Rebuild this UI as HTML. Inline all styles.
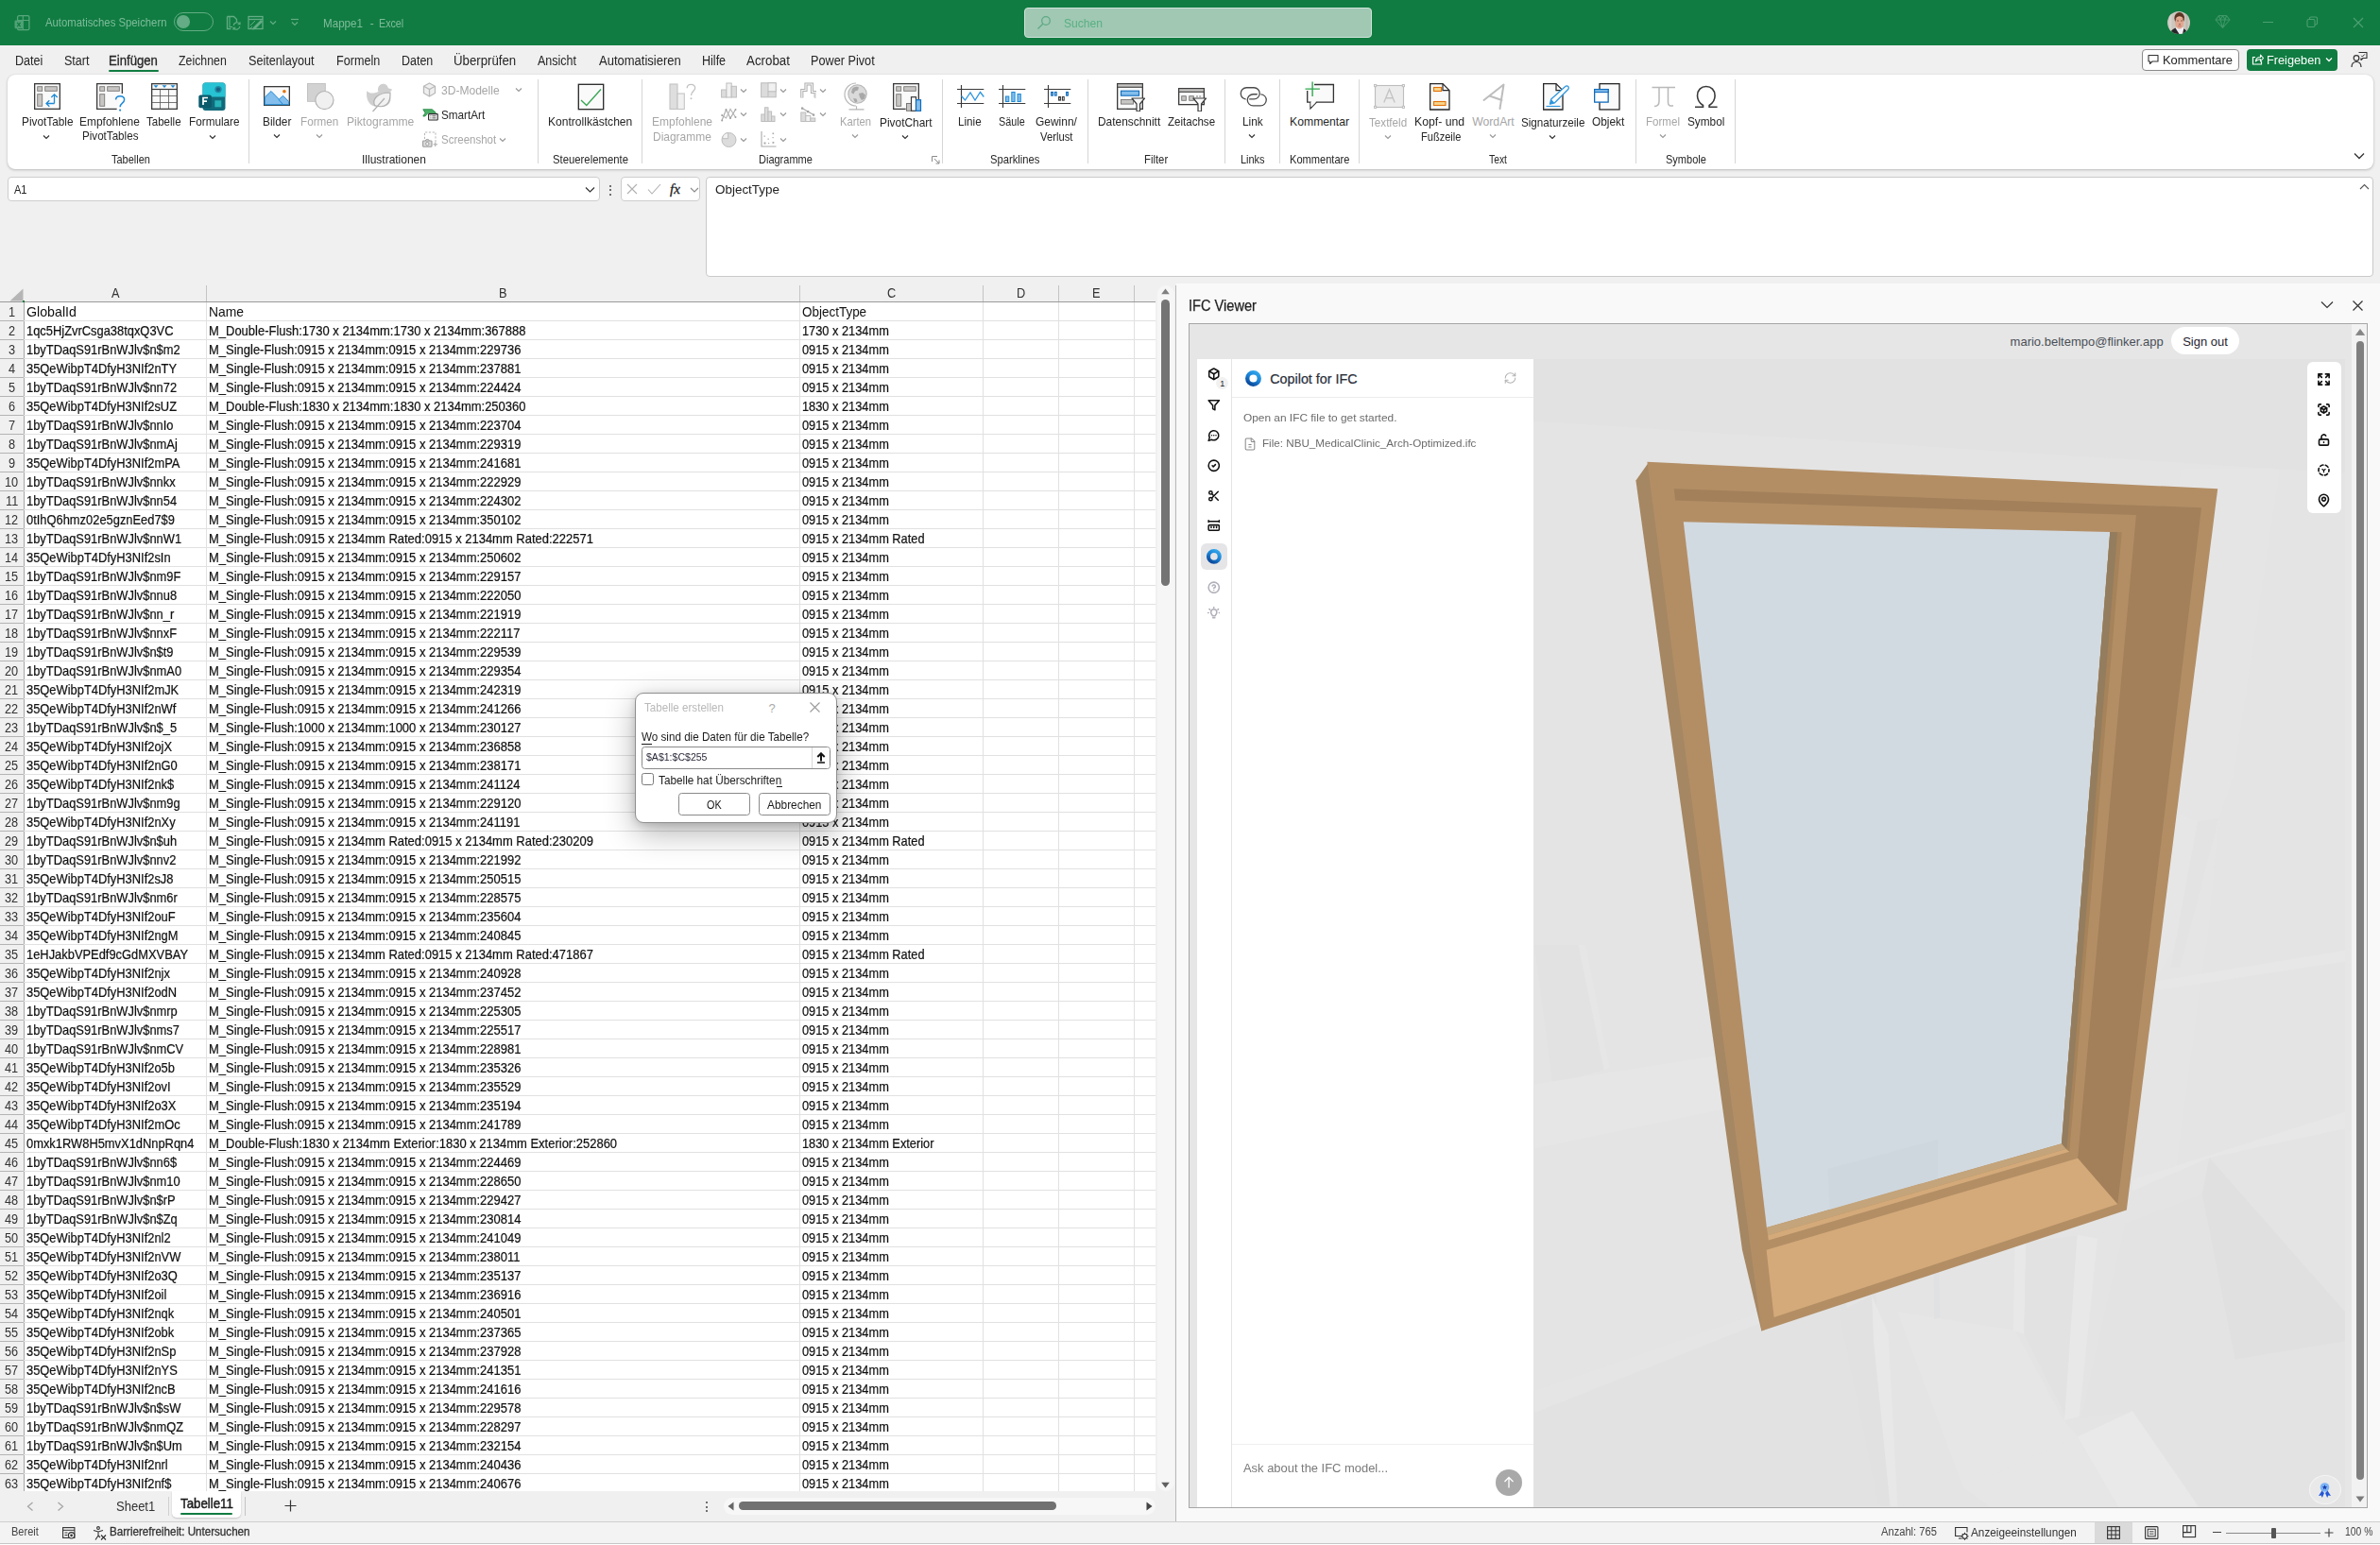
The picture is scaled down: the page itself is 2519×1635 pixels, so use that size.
<!DOCTYPE html>
<html lang="de"><head><meta charset="utf-8"><title>Mappe1 - Excel</title><style>html,body{margin:0;padding:0;}
body{width:2519px;height:1635px;overflow:hidden;position:relative;background:#f0f0f0;font-family:"Liberation Sans",sans-serif;}
.b{position:absolute;display:block;}
.t{position:absolute;display:block;white-space:nowrap;transform-origin:0 0;}
.c{-webkit-text-stroke:0.22px #111;}
</style></head><body>
<div class="b" style="left:0.00px;top:0.00px;width:2519.00px;height:48.00px;background:#107C41;"></div>
<svg class="b" style="left:15.00px;top:16.00px;" width="17" height="17" viewBox="0 0 17 17"><rect x="3.600" y=".650" width="12.300" height="15" rx="1.500" fill="none" stroke="#58a67c" stroke-width="1.300"/><path d="M9.300 .650V15.650M3.600 5.500h12.300" stroke="#58a67c" stroke-width="1.100" fill="none"/><rect x=".500" y="5.500" width="8.800" height="8.800" rx="1.200" fill="#4fa276"/><path d="M3.200 7.800l3.400 4.300M6.600 7.800l-3.400 4.300" stroke="#107C41" stroke-width="1.200"/></svg>
<span class="t" style="left:48.20px;top:18.27px;font-size:12.20px;line-height:12.20px;color:#7fbb9c;transform:scaleX(0.9296);">Automatisches Speichern</span>
<div class="b" style="left:184.00px;top:13.20px;width:41.80px;height:20.00px;border:1.3px solid #63ac85;border-radius:10px;box-sizing:border-box;"></div>
<div class="b" style="left:187.10px;top:16.30px;width:13.70px;height:13.70px;background:#63ac85;border-radius:6.850px;"></div>
<svg class="b" style="left:239.00px;top:15.00px;" width="16" height="18" viewBox="0 0 16 18"><path d="M1.5 2.5h7l3 3v3" fill="none" stroke="#63ac85" stroke-width="1.3"/><path d="M1.5 2.5v13h4" fill="none" stroke="#63ac85" stroke-width="1.3"/><path d="M4 2.5v11h3" fill="none" stroke="#63ac85" stroke-width="1.1"/><path d="M8.2 12a3.6 3.6 0 0 1 6.6-1.6M14.8 13a3.6 3.6 0 0 1-6.6 1.6" fill="none" stroke="#63ac85" stroke-width="1.2"/><path d="M15 8.3v2.4h-2.4M8 16.7v-2.4h2.4" fill="none" stroke="#63ac85" stroke-width="1.1"/></svg>
<svg class="b" style="left:262.00px;top:16.00px;" width="18" height="16" viewBox="0 0 18 16"><rect x="1" y="1.5" width="15" height="13" fill="none" stroke="#63ac85" stroke-width="1.3"/><path d="M1 4.5h15" stroke="#63ac85" stroke-width="1.3"/><path d="M6 13l8-8 2 2-8 8-2.6.6z" fill="#63ac85"/><path d="M3 11l5-5M3 14l2-2" stroke="#63ac85" stroke-width="1"/></svg>
<svg class="b" style="left:285.00px;top:21.00px;" width="8" height="6" viewBox="0 0 8 6"><path d="M1 1.5l3 3 3-3" fill="none" stroke="#63ac85" stroke-width="1.2"/></svg>
<svg class="b" style="left:306.50px;top:19.00px;" width="10" height="9" viewBox="0 0 10 9"><path d="M1 1.5h8" stroke="#63ac85" stroke-width="1.2"/><path d="M2 4.5l3 3 3-3" fill="none" stroke="#63ac85" stroke-width="1.2"/></svg>
<span class="t" style="left:341.50px;top:18.77px;font-size:12.20px;line-height:12.20px;color:#7fbb9c;transform:scaleX(0.9527);">Mappe1</span>
<span class="t" style="left:391.50px;top:18.77px;font-size:12.20px;line-height:12.20px;color:#7fbb9c;">-</span>
<span class="t" style="left:400.50px;top:18.77px;font-size:12.20px;line-height:12.20px;color:#7fbb9c;transform:scaleX(0.8782);">Excel</span>
<div class="b" style="left:1084.00px;top:8.00px;width:368.00px;height:32.00px;background:#a0c8b3;border:1px solid #d0e4d9;border-radius:4px;box-sizing:border-box;"></div>
<svg class="b" style="left:1097.00px;top:16.00px;" width="16" height="16" viewBox="0 0 16 16"><circle cx="10" cy="6" r="4.3" fill="none" stroke="#5fa985" stroke-width="1.3"/><path d="M6.8 9.2L1.5 14.5" stroke="#5fa985" stroke-width="1.3"/></svg>
<span class="t" style="left:1126.30px;top:18.10px;font-size:13.00px;line-height:13.00px;color:#58b083;transform:scaleX(0.9300);">Suchen</span>
<svg class="b" style="left:2294.00px;top:12.00px;" width="24" height="24" viewBox="0 0 24 24"><defs><clipPath id="av"><circle cx="12" cy="12" r="12"/></clipPath><filter id="avb" x="-10%" y="-10%" width="120%" height="120%"><feGaussianBlur stdDeviation=".45"/></filter></defs><g clip-path="url(#av)"><rect width="24" height="24" fill="#cbc7bf"/><g filter="url(#avb)"><rect x="2" y="0" width="2.500" height="24" fill="#d6d1cb"/><rect x="19.500" y="0" width="2" height="24" fill="#bdb8ae"/><path d="M3 24c.500-4 3-5.500 5.500-6.500l7 0c3 1 5 2.500 5.500 6.500z" fill="#25252a"/><path d="M8.300 17.300l4.400 7h3.300l1.300-6.500-2.300-1.500z" fill="#efeff4"/><ellipse cx="12.700" cy="7.200" rx="5.300" ry="6.300" fill="#5b3521"/><ellipse cx="12.700" cy="12.200" rx="4.500" ry="6.400" fill="#e2a78f"/><path d="M8.400 8.500c1-2.500 2.500-3.300 4.300-3.300s3.600.800 4.300 3.300c-1.500-1.200-3-1.500-4.300-1.500s-3 .300-4.300 1.500z" fill="#e8b39c"/><path d="M10 10h2M14 10h2" stroke="#6b4636" stroke-width=".700"/><path d="M12.200 13.700h1.600" stroke="#7a4a3a" stroke-width=".900"/><path d="M11.200 15.600h3.400" stroke="#c9746e" stroke-width="1"/></g></g></svg>
<svg class="b" style="left:2344.00px;top:15.00px;" width="17" height="16" viewBox="0 0 17 16"><path d="M4.500 1.500h8l3.500 4.500-7.500 8.500L1 6z M1 6h15 M4.500 1.500l1.500 4.500 2.500 8.500 2.500-8.500 1.500-4.500 M6 6l2.500-4.500L11 6" fill="none" stroke="#3f9668" stroke-width="1.1" stroke-linejoin="round"/></svg>
<div class="b" style="left:2395.00px;top:23.30px;width:11.00px;height:1.20px;background:#4c9f73;"></div>
<svg class="b" style="left:2441.00px;top:17.00px;" width="13" height="13" viewBox="0 0 13 13"><rect x="1" y="3.500" width="8" height="8" rx="1.500" fill="none" stroke="#4c9f73" stroke-width="1.100"/><path d="M3.500 3.500v-1a1.500 1.500 0 0 1 1.500-1.500h5a1.500 1.500 0 0 1 1.500 1.500v5a1.500 1.500 0 0 1-1.500 1.500h-1" fill="none" stroke="#4c9f73" stroke-width="1.100"/></svg>
<svg class="b" style="left:2490.00px;top:18.00px;" width="12" height="12" viewBox="0 0 12 12"><path d="M1 1l10 10M11 1L1 11" stroke="#4c9f73" stroke-width="1.200"/></svg>
<div class="b" style="left:0.00px;top:48.00px;width:2519.00px;height:245.00px;background:#f0f0f0;"></div>
<span class="t" style="left:16.40px;top:57.45px;font-size:14.00px;line-height:14.00px;color:#262626;transform:scaleX(0.8996);">Datei</span>
<span class="t" style="left:68.30px;top:57.45px;font-size:14.00px;line-height:14.00px;color:#262626;transform:scaleX(0.8964);">Start</span>
<span class="t" style="left:115.40px;top:57.45px;font-size:14.00px;line-height:14.00px;color:#262626;transform:scaleX(0.9391);-webkit-text-stroke:0.3px #262626;">Einfügen</span>
<span class="t" style="left:188.70px;top:57.45px;font-size:14.00px;line-height:14.00px;color:#262626;transform:scaleX(0.8821);">Zeichnen</span>
<span class="t" style="left:263.40px;top:57.45px;font-size:14.00px;line-height:14.00px;color:#262626;transform:scaleX(0.9033);">Seitenlayout</span>
<span class="t" style="left:356.00px;top:57.45px;font-size:14.00px;line-height:14.00px;color:#262626;transform:scaleX(0.9018);">Formeln</span>
<span class="t" style="left:425.40px;top:57.45px;font-size:14.00px;line-height:14.00px;color:#262626;transform:scaleX(0.8914);">Daten</span>
<span class="t" style="left:480.40px;top:57.45px;font-size:14.00px;line-height:14.00px;color:#262626;transform:scaleX(0.9452);">Überprüfen</span>
<span class="t" style="left:569.00px;top:57.45px;font-size:14.00px;line-height:14.00px;color:#262626;transform:scaleX(0.8931);">Ansicht</span>
<span class="t" style="left:634.00px;top:57.45px;font-size:14.00px;line-height:14.00px;color:#262626;transform:scaleX(0.9296);">Automatisieren</span>
<span class="t" style="left:743.30px;top:57.45px;font-size:14.00px;line-height:14.00px;color:#262626;transform:scaleX(0.8962);">Hilfe</span>
<span class="t" style="left:790.10px;top:57.45px;font-size:14.00px;line-height:14.00px;color:#262626;transform:scaleX(0.9514);">Acrobat</span>
<span class="t" style="left:858.20px;top:57.45px;font-size:14.00px;line-height:14.00px;color:#262626;transform:scaleX(0.9064);">Power Pivot</span>
<div class="b" style="left:115.20px;top:73.50px;width:53.30px;height:2.20px;background:#107C41;border-radius:1.1px;"></div>
<div class="b" style="left:2267.40px;top:51.50px;width:102.20px;height:23.00px;background:#fff;border:1px solid #8a8a8a;border-radius:4px;box-sizing:border-box;"></div>
<svg class="b" style="left:2273.00px;top:56.50px;" width="12" height="12" viewBox="0 0 12 12"><path d="M1 1.500h10v6.500h-6l-2.500 2.500v-2.500h-1.500z" fill="none" stroke="#333" stroke-width="1.100" stroke-linejoin="round"/></svg>
<span class="t" style="left:2288.60px;top:56.87px;font-size:13.50px;line-height:13.50px;color:#222;transform:scaleX(0.9576);">Kommentare</span>
<div class="b" style="left:2378.00px;top:51.50px;width:95.50px;height:23.00px;background:#107C41;border-radius:4px;"></div>
<svg class="b" style="left:2383.00px;top:56.00px;" width="13" height="13" viewBox="0 0 13 13"><path d="M4 4.500h-2.500v7.500h9v-3" fill="none" stroke="#fff" stroke-width="1.200"/><path d="M4.500 9c0-3 2-4.500 5-4.500v-2.500l3 3.500-3 3.500v-2.300c-2.500 0-4 .5-5 2.300z" fill="none" stroke="#fff" stroke-width="1.100" stroke-linejoin="round"/></svg>
<span class="t" style="left:2399.20px;top:56.87px;font-size:13.50px;line-height:13.50px;color:#fff;transform:scaleX(0.9427);">Freigeben</span>
<svg class="b" style="left:2461.00px;top:60.00px;" width="8" height="6" viewBox="0 0 8 6"><path d="M1 1.500l3 3 3-3" fill="none" stroke="#fff" stroke-width="1.300"/></svg>
<svg class="b" style="left:2487.50px;top:53.50px;" width="19" height="19" viewBox="0 0 19 19"><circle cx="6" cy="7.500" r="2.800" fill="none" stroke="#333" stroke-width="1.200"/><path d="M1 17c0-4 2-5.500 5-5.500s5 1.500 5 5.500" fill="none" stroke="#333" stroke-width="1.200"/><path d="M8.500 1.500h8.500v6h-4l-2 2v-2" fill="none" stroke="#333" stroke-width="1.100" stroke-linejoin="round"/><path d="M11.200 4.800l1.200 1.200 2.400-2.600" fill="none" stroke="#333" stroke-width="1"/></svg>
<div class="b" style="left:8.00px;top:79.00px;width:2503.50px;height:100.00px;background:#fff;border-radius:8px;box-shadow:0 1px 3px rgba(0,0,0,.22),0 0 1px rgba(0,0,0,.15);"></div>
<div class="b" style="left:8.40px;top:187.00px;width:627.00px;height:25.50px;background:#fff;border:1px solid #cdcdcd;border-radius:4px;box-sizing:border-box;"></div>
<span class="t" style="left:15.10px;top:193.87px;font-size:13.50px;line-height:13.50px;color:#222;transform:scaleX(0.8176);">A1</span>
<svg class="b" style="left:619.00px;top:197.00px;" width="11" height="8" viewBox="0 0 11 8"><path d="M1 1.500l4.500 4.500 4.500-4.500" fill="none" stroke="#333" stroke-width="1.200"/></svg>
<div class="b" style="left:644.70px;top:195.50px;width:2.00px;height:2.00px;background:#444;border-radius:1px;"></div>
<div class="b" style="left:644.70px;top:200.00px;width:2.00px;height:2.00px;background:#444;border-radius:1px;"></div>
<div class="b" style="left:644.70px;top:204.50px;width:2.00px;height:2.00px;background:#444;border-radius:1px;"></div>
<div class="b" style="left:656.50px;top:187.00px;width:84.70px;height:25.50px;background:#fff;border:1px solid #cdcdcd;border-radius:4px;box-sizing:border-box;"></div>
<svg class="b" style="left:663.00px;top:194.00px;" width="12" height="12" viewBox="0 0 12 12"><path d="M1 1l10 10M11 1L1 11" stroke="#b0b0b0" stroke-width="1.100"/></svg>
<svg class="b" style="left:685.00px;top:194.00px;" width="15" height="12" viewBox="0 0 15 12"><path d="M1 6.500l4 4.500 9-10" fill="none" stroke="#b0b0b0" stroke-width="1.100"/></svg>
<span class="t" style="left:709px;top:190.500px;font-size:15px;line-height:18px;font-family:'Liberation Serif',serif;font-style:italic;color:#222;-webkit-text-stroke:0.3px #222;">fx</span>
<svg class="b" style="left:729.50px;top:198.00px;" width="10" height="7" viewBox="0 0 10 7"><path d="M1 1l4 4 4-4" fill="none" stroke="#8a8a8a" stroke-width="1.100"/></svg>
<div class="b" style="left:747.00px;top:187.00px;width:1765.00px;height:106.00px;background:#fff;border:1px solid #c9c9c9;border-radius:4px;box-sizing:border-box;"></div>
<span class="t" style="left:757.00px;top:193.87px;font-size:13.50px;line-height:13.50px;color:#222;transform:scaleX(0.9959);">ObjectType</span>
<svg class="b" style="left:2497.00px;top:194.00px;" width="11" height="7" viewBox="0 0 11 7"><path d="M1 6l4.500-4.500 4.500 4.500" fill="none" stroke="#555" stroke-width="1.100"/></svg>
<svg class="b" style="left:2491.00px;top:161.00px;" width="12" height="8" viewBox="0 0 12 8"><path d="M1 1.500l5 5 5-5" fill="none" stroke="#333" stroke-width="1.300"/></svg>
<div class="b" style="left:263.00px;top:84.40px;width:1.00px;height:88.50px;background:#d6d6d6;"></div>
<div class="b" style="left:568.70px;top:84.40px;width:1.00px;height:88.50px;background:#d6d6d6;"></div>
<div class="b" style="left:678.90px;top:84.40px;width:1.00px;height:88.50px;background:#d6d6d6;"></div>
<div class="b" style="left:996.80px;top:84.40px;width:1.00px;height:88.50px;background:#d6d6d6;"></div>
<div class="b" style="left:1150.90px;top:84.40px;width:1.00px;height:88.50px;background:#d6d6d6;"></div>
<div class="b" style="left:1296.00px;top:84.40px;width:1.00px;height:88.50px;background:#d6d6d6;"></div>
<div class="b" style="left:1354.00px;top:84.40px;width:1.00px;height:88.50px;background:#d6d6d6;"></div>
<div class="b" style="left:1438.10px;top:84.40px;width:1.00px;height:88.50px;background:#d6d6d6;"></div>
<div class="b" style="left:1730.60px;top:84.40px;width:1.00px;height:88.50px;background:#d6d6d6;"></div>
<div class="b" style="left:1835.70px;top:84.40px;width:1.00px;height:88.50px;background:#d6d6d6;"></div>
<svg class="b" style="left:36.00px;top:88.00px;" width="28" height="28" viewBox="0 0 28 28"><rect x=".650" y=".650" width="26.700" height="26.700" fill="#fafafa" stroke="#3a3a3a" stroke-width="1.300"/><rect x="3.700" y="3.700" width="5" height="4.600" fill="#c8c6c4" stroke="#797775" stroke-width=".900"/><rect x="11.700" y="3.700" width="12.600" height="4.600" fill="#c8c6c4" stroke="#797775" stroke-width=".900"/><rect x="3.700" y="11.700" width="5" height="12.600" fill="#c8c6c4" stroke="#797775" stroke-width=".900"/><path d="M21.500 21.500v-9.500M18.300 15l3.200-3.200 3.200 3.200M21.500 21.500h-8.500M16.300 18.300l-3.300 3.200 3.300 3.200" fill="none" stroke="#1e8ad6" stroke-width="1.300"/></svg>
<span class="t" style="left:22.60px;top:122.67px;font-size:12.20px;line-height:12.20px;color:#262626;transform:scaleX(0.9700);">PivotTable</span>
<svg class="b" style="left:45.30px;top:141.50px;" width="8" height="6" viewBox="0 0 8 6"><path d="M1 1.500l3 3 3-3" fill="none" stroke="#333" stroke-width="1.200"/></svg>
<svg class="b" style="left:102.00px;top:88.00px;" width="32" height="32" viewBox="0 0 32 32"><path d="M27.350 11v-10.350h-26.700v26.700h21" fill="#fafafa" stroke="#3a3a3a" stroke-width="1.300"/><rect x="3.700" y="3.700" width="5" height="4.600" fill="#c8c6c4" stroke="#797775" stroke-width=".900"/><rect x="11.700" y="3.700" width="12.600" height="4.600" fill="#c8c6c4" stroke="#797775" stroke-width=".900"/><rect x="3.700" y="11.700" width="5" height="12.600" fill="#c8c6c4" stroke="#797775" stroke-width=".900"/><path d="M20.600 17.600c0-5.200 9-5.200 9 0 0 3.600-4.500 3.600-4.500 7.600" fill="none" stroke="#1e8ad6" stroke-width="1.500"/><circle cx="25.100" cy="28.600" r="1.100" fill="#1e8ad6"/></svg>
<span class="t" style="left:84.35px;top:122.67px;font-size:12.20px;line-height:12.20px;color:#262626;transform:scaleX(0.9815);">Empfohlene</span>
<span class="t" style="left:86.55px;top:138.47px;font-size:12.20px;line-height:12.20px;color:#262626;transform:scaleX(0.9537);">PivotTables</span>
<svg class="b" style="left:160.00px;top:88.00px;" width="28" height="28" viewBox="0 0 28 28"><rect x=".650" y=".650" width="26.700" height="26.700" fill="#fafafa" stroke="#3a3a3a" stroke-width="1.300"/><path d="M.650 6.500h26.700" stroke="#3a3a3a" stroke-width="1.200"/><path d="M.650 13.500h26.700M.650 20.500h26.700M9.500 6.500v21M18.500 6.500v21" stroke="#555" stroke-width=".800"/><path d="M2.500 2.300h5l-2.500 2.700zM11.500 2.300h5l-2.500 2.700zM20.500 2.300h5l-2.500 2.700z" fill="#1e8ad6"/></svg>
<span class="t" style="left:155.30px;top:122.67px;font-size:12.20px;line-height:12.20px;color:#262626;transform:scaleX(0.9467);">Tabelle</span>
<svg class="b" style="left:209.50px;top:86.50px;" width="29" height="31" viewBox="0 0 29 31"><rect x="4.500" y=".500" width="24" height="29.500" rx="3" fill="#116a7b"/><path d="M4.500 15.500v-12a3 3 0 0 1 3-3h18a3 3 0 0 1 3 3v12z" fill="#27c2d3"/><circle cx="21" cy="7.600" r="3.700" fill="#1f8aa2"/><circle cx="21" cy="7.600" r="2.100" fill="#1a5f85"/><rect x="17.300" y="19.300" width="7" height="7" fill="#27b3b8"/><rect x=".300" y="13.600" width="13.600" height="13.600" rx="2" fill="#0b5a6b"/><path d="M5 24v-7.500h5M5 20.200h4" fill="none" stroke="#fff" stroke-width="1.700"/></svg>
<span class="t" style="left:199.50px;top:122.67px;font-size:12.20px;line-height:12.20px;color:#262626;transform:scaleX(0.9643);">Formulare</span>
<svg class="b" style="left:221.20px;top:141.50px;" width="8" height="6" viewBox="0 0 8 6"><path d="M1 1.500l3 3 3-3" fill="none" stroke="#333" stroke-width="1.200"/></svg>
<span class="t" style="left:117.60px;top:162.57px;font-size:12.20px;line-height:12.20px;color:#262626;transform:scaleX(0.9022);">Tabellen</span>
<svg class="b" style="left:279.00px;top:91.00px;" width="28" height="21" viewBox="0 0 28 21"><rect x=".650" y=".650" width="26.700" height="19.700" fill="#fafafa" stroke="#3a3a3a" stroke-width="1.300"/><path d="M1.300 12l6.700-6.500 13.800 14.200h-20.500z" fill="#83beec" stroke="#1e8ad6" stroke-width="1"/><path d="M16 14.500l4.500-4.200 6.200 6.200v3.200h-6z" fill="#83beec" stroke="#1e8ad6" stroke-width="1"/><circle cx="21.900" cy="5.800" r="1.800" fill="#e3730a"/></svg>
<span class="t" style="left:278.00px;top:122.67px;font-size:12.20px;line-height:12.20px;color:#262626;transform:scaleX(0.9747);">Bilder</span>
<svg class="b" style="left:288.50px;top:141.30px;" width="8" height="6" viewBox="0 0 8 6"><path d="M1 1.500l3 3 3-3" fill="none" stroke="#333" stroke-width="1.200"/></svg>
<svg class="b" style="left:324.50px;top:87.60px;" width="30" height="29" viewBox="0 0 30 29"><rect x=".500" y=".500" width="18.800" height="18.800" fill="#d2d2d2" stroke="#c2c2c2" stroke-width="1"/><circle cx="18.400" cy="18.100" r="9.600" fill="#f0f0f0" stroke="#b4b4b4" stroke-width="1.200"/></svg>
<span class="t" style="left:318.35px;top:122.67px;font-size:12.20px;line-height:12.20px;color:#a6a6a6;transform:scaleX(0.9589);">Formen</span>
<svg class="b" style="left:334.30px;top:141.30px;" width="8" height="6" viewBox="0 0 8 6"><path d="M1 1.500l3 3 3-3" fill="none" stroke="#9a9a9a" stroke-width="1.200"/></svg>
<svg class="b" style="left:387.00px;top:87.50px;" width="30" height="31" viewBox="0 0 30 31"><path d="M13.500 9c-1.600-3.700.800-8.300 5-8.300 3.300 0 5.200 2.400 5.300 4.600l4.200 1.200c-.700 2.300-2.600 3.500-5 3.500 3 2.500 4 5.500 3.300 8.500-1 4.500-5 6.500-10.500 6.500h-3.300c-6.500 0-11.500-5-11.500-13.500 0-1.200.100-2.300.400-3.300 3 3.300 7 2.800 12.100.800z" fill="#cfcfcf"/><path d="M9.500 23.500c-2.500-6 2-13.500 16.500-13.500.600 11.500-5 17.500-16.500 13.500z" fill="#f2f2f2" stroke="#b0b0b0" stroke-width="1.200"/><path d="M7.500 30l12.500-14" stroke="#b0b0b0" stroke-width="1.200" fill="none"/></svg>
<span class="t" style="left:366.60px;top:122.67px;font-size:12.20px;line-height:12.20px;color:#a6a6a6;transform:scaleX(0.9936);">Piktogramme</span>
<svg class="b" style="left:447.00px;top:87.00px;" width="15" height="16" viewBox="0 0 15 16"><path d="M7.500 1l6 3.200v7.300l-6 3.500-6-3.500v-7.300z" fill="#efefef" stroke="#b9b9b9" stroke-width="1.300" stroke-linejoin="round"/><path d="M1.500 4.200l6 3.300 6-3.300M7.500 7.500v7.500" fill="none" stroke="#b9b9b9" stroke-width="1.300"/></svg>
<span class="t" style="left:467.20px;top:89.67px;font-size:12.20px;line-height:12.20px;color:#a6a6a6;transform:scaleX(0.9891);">3D-Modelle</span>
<svg class="b" style="left:545.20px;top:92.30px;" width="8" height="6" viewBox="0 0 8 6"><path d="M1 1.500l3 3 3-3" fill="none" stroke="#9a9a9a" stroke-width="1.200"/></svg>
<svg class="b" style="left:446.50px;top:114.50px;" width="17" height="13" viewBox="0 0 17 13"><path d="M.800 .800h9.500l4 3.500h-8l-3.500 3.700h-2l2.300-3.600z" fill="#4db36a" stroke="#21853f" stroke-width=".900" stroke-linejoin="round"/><rect x="6.600" y="5.600" width="9.600" height="6.400" rx=".500" fill="#fff" stroke="#262626" stroke-width="1.100"/><path d="M8.400 7.800h1M10.400 7.800h4M8.400 9.900h1M10.400 9.900h4" stroke="#262626" stroke-width=".800"/></svg>
<span class="t" style="left:467.20px;top:115.97px;font-size:12.20px;line-height:12.20px;color:#262626;transform:scaleX(0.9621);">SmartArt</span>
<svg class="b" style="left:446.50px;top:138.50px;" width="17" height="17" viewBox="0 0 17 17"><path d="M2.500 8v-7h11.500v11" fill="none" stroke="#b5b5b5" stroke-width="1" stroke-dasharray="2.200 1.600"/><rect x=".600" y="10" width="9.400" height="6.300" rx=".800" fill="#dcdcdc" stroke="#9c9c9c" stroke-width="1.100"/><path d="M3.300 10l.700-1.300h2.600l.700 1.300" fill="none" stroke="#9c9c9c" stroke-width="1"/><circle cx="5.300" cy="13.200" r="1.700" fill="#f4f4f4" stroke="#9c9c9c" stroke-width="1"/><path d="M11.500 13.800h4.500M13.750 11.500v4.600" stroke="#a8a8a8" stroke-width="1"/></svg>
<span class="t" style="left:467.20px;top:141.87px;font-size:12.20px;line-height:12.20px;color:#a6a6a6;transform:scaleX(0.9431);">Screenshot</span>
<svg class="b" style="left:528.00px;top:144.50px;" width="8" height="6" viewBox="0 0 8 6"><path d="M1 1.500l3 3 3-3" fill="none" stroke="#9a9a9a" stroke-width="1.200"/></svg>
<span class="t" style="left:382.50px;top:162.57px;font-size:12.20px;line-height:12.20px;color:#262626;transform:scaleX(0.9831);">Illustrationen</span>
<svg class="b" style="left:610.70px;top:87.70px;" width="29" height="29" viewBox="0 0 29 29"><rect x="1.300" y="1.300" width="26.400" height="26.400" fill="#fafafa" stroke="#262626" stroke-width="1.300"/><path d="M4 18l5.800 5.500 15.200-17" fill="none" stroke="#3aa655" stroke-width="1.400"/></svg>
<span class="t" style="left:579.70px;top:122.67px;font-size:12.20px;line-height:12.20px;color:#262626;transform:scaleX(0.9912);">Kontrollkästchen</span>
<span class="t" style="left:585.00px;top:162.57px;font-size:12.20px;line-height:12.20px;color:#262626;transform:scaleX(0.9289);">Steuerelemente</span>
<svg class="b" style="left:707.50px;top:87.50px;" width="30" height="29" viewBox="0 0 30 29"><rect x="1" y="1" width="8" height="26.500" fill="#dedede" stroke="#c4c4c4" stroke-width="1.100"/><rect x="9" y="11" width="7.300" height="16.500" fill="#f0f0f0" stroke="#c4c4c4" stroke-width="1.100"/><path d="M19.200 5.200c0-5 8.500-5 8.500-.300 0 3.500-4.200 3.800-4.200 8" fill="none" stroke="#c2c2c2" stroke-width="1.300"/><circle cx="23.500" cy="16.200" r="1" fill="#c2c2c2"/></svg>
<span class="t" style="left:690.35px;top:122.67px;font-size:12.20px;line-height:12.20px;color:#a6a6a6;transform:scaleX(0.9845);">Empfohlene</span>
<span class="t" style="left:691.45px;top:139.07px;font-size:12.20px;line-height:12.20px;color:#a6a6a6;transform:scaleX(0.9818);">Diagramme</span>
<svg class="b" style="left:762.50px;top:86.50px;" width="17" height="17" viewBox="0 0 17 17"><rect x=".600" y="8" width="5.300" height="8" fill="#dcdcdc" stroke="#bdbdbd"/><rect x="5.900" y="1" width="5.300" height="15" fill="#f1f1f1" stroke="#bdbdbd"/><rect x="11.200" y="4.300" width="5.200" height="11.700" fill="#dcdcdc" stroke="#bdbdbd"/></svg>
<svg class="b" style="left:762.50px;top:112.50px;" width="17" height="16" viewBox="0 0 17 16"><path d="M1 14.500l4.500-11.500 4.500 9 5.500-9" fill="none" stroke="#a9a9a9" stroke-width="1.100"/><path d="M1 9l4.500 3 4.500-9.500 5.500 8.500" fill="none" stroke="#b5b5b5" stroke-width="1.100"/><g fill="#a0a0a0"><circle cx="1.200" cy="9" r="1"/><circle cx="5.500" cy="3" r="1"/><circle cx="10" cy="12" r="1"/><circle cx="15.500" cy="3" r="1"/><circle cx="15.500" cy="11" r="1"/><circle cx="1.200" cy="14.500" r="1"/></g></svg>
<svg class="b" style="left:762.50px;top:138.50px;" width="17" height="17" viewBox="0 0 17 17"><circle cx="8.500" cy="9" r="7.500" fill="#dcdcdc" stroke="#bdbdbd" stroke-width="1"/><path d="M1.500 7.700h6.200v-6.200a7 7 0 0 0-6.200 6.200z" fill="#f1f1f1" stroke="#bdbdbd" stroke-width="1"/></svg>
<svg class="b" style="left:783.30px;top:92.60px;" width="8" height="6" viewBox="0 0 8 6"><path d="M1 1.500l3 3 3-3" fill="none" stroke="#9a9a9a" stroke-width="1.200"/></svg>
<svg class="b" style="left:783.30px;top:118.40px;" width="8" height="6" viewBox="0 0 8 6"><path d="M1 1.500l3 3 3-3" fill="none" stroke="#9a9a9a" stroke-width="1.200"/></svg>
<svg class="b" style="left:783.30px;top:144.50px;" width="8" height="6" viewBox="0 0 8 6"><path d="M1 1.500l3 3 3-3" fill="none" stroke="#9a9a9a" stroke-width="1.200"/></svg>
<svg class="b" style="left:804.70px;top:86.50px;" width="17" height="17" viewBox="0 0 17 17"><rect x=".600" y=".800" width="15.600" height="15" fill="#dcdcdc" stroke="#bdbdbd"/><rect x="8" y=".800" width="8.200" height="9" fill="#f1f1f1" stroke="#bdbdbd"/><path d="M8 9.800v6" stroke="#bdbdbd"/></svg>
<svg class="b" style="left:805.20px;top:112.50px;" width="16" height="16" viewBox="0 0 16 16"><rect x=".800" y="8" width="3.600" height="7.500" fill="#dcdcdc" stroke="#bdbdbd"/><rect x="4.400" y=".800" width="3.600" height="14.700" fill="#dcdcdc" stroke="#bdbdbd"/><rect x="8" y="5" width="3.600" height="10.500" fill="#dcdcdc" stroke="#bdbdbd"/><rect x="11.600" y="10" width="3.400" height="5.500" fill="#dcdcdc" stroke="#bdbdbd"/></svg>
<svg class="b" style="left:804.70px;top:138.50px;" width="17" height="17" viewBox="0 0 17 17"><path d="M1 0v16h15.500" fill="none" stroke="#a9a9a9" stroke-width="1.100"/><g fill="#a9a9a9"><rect x="12.500" y="1.500" width="1.600" height="1.600"/><rect x="3.500" y="4.500" width="1.300" height="1.300"/><rect x="7.500" y="7.500" width="1.300" height="1.300"/><rect x="12.500" y="6" width="1.200" height="1.200"/><rect x="3.500" y="11.500" width="2" height="2"/><rect x="12.500" y="11" width="1.800" height="1.800"/><rect x="8" y="12" width="1.200" height="1.200"/></g></svg>
<svg class="b" style="left:825.30px;top:92.60px;" width="8" height="6" viewBox="0 0 8 6"><path d="M1 1.500l3 3 3-3" fill="none" stroke="#9a9a9a" stroke-width="1.200"/></svg>
<svg class="b" style="left:825.30px;top:118.40px;" width="8" height="6" viewBox="0 0 8 6"><path d="M1 1.500l3 3 3-3" fill="none" stroke="#9a9a9a" stroke-width="1.200"/></svg>
<svg class="b" style="left:825.30px;top:144.50px;" width="8" height="6" viewBox="0 0 8 6"><path d="M1 1.500l3 3 3-3" fill="none" stroke="#9a9a9a" stroke-width="1.200"/></svg>
<svg class="b" style="left:846.70px;top:86.50px;" width="17" height="17" viewBox="0 0 17 17"><path d="M1.800 16.500v-8h4.200v-6.500h6.500v8.500h3.700v6" fill="none" stroke="#b0b0b0" stroke-width="3.200"/><path d="M1.800 16.500v-8h4.200v-6.500h6.500v8.500h3.700v6" fill="none" stroke="#f4f4f4" stroke-width="1.200"/></svg>
<svg class="b" style="left:846.70px;top:112.50px;" width="17" height="16" viewBox="0 0 17 16"><rect x=".800" y="6" width="5" height="9.500" fill="#dcdcdc" stroke="#bdbdbd"/><rect x="5.800" y="9.500" width="5" height="6" fill="#f1f1f1" stroke="#bdbdbd"/><rect x="10.800" y="12" width="5" height="3.500" fill="#dcdcdc" stroke="#bdbdbd"/><path d="M2 1.500l6 3.500 6 3.500" fill="none" stroke="#a9a9a9" stroke-width="1.100"/><g fill="#a0a0a0"><rect x="1" y=".500" width="2.200" height="2.200"/><rect x="7" y="4" width="2.200" height="2.200"/><rect x="13" y="7.500" width="2.200" height="2.200"/></g></svg>
<svg class="b" style="left:867.30px;top:92.60px;" width="8" height="6" viewBox="0 0 8 6"><path d="M1 1.500l3 3 3-3" fill="none" stroke="#9a9a9a" stroke-width="1.200"/></svg>
<svg class="b" style="left:867.30px;top:118.40px;" width="8" height="6" viewBox="0 0 8 6"><path d="M1 1.500l3 3 3-3" fill="none" stroke="#9a9a9a" stroke-width="1.200"/></svg>
<svg class="b" style="left:892.50px;top:86.50px;" width="27" height="30" viewBox="0 0 27 30"><path d="M13 1a12 12 0 0 0 0 24" fill="none" stroke="#b9b9b9" stroke-width="1.200"/><circle cx="14.500" cy="12.500" r="9.700" fill="#dadada" stroke="#b5b5b5" stroke-width="1.100"/><path d="M9 7c2-2.500 5-3 7-1.500l-1 3-3 1-1.500 3-2.500-1.500zM16 12l4-1 3 2.500-1 4-3 1.500-2-3zM10 17l3.500.5 1 3-2.500 1z" fill="#a8a8a8"/><path d="M13.500 25.200v3.500M5.500 28.900h16" stroke="#b5b5b5" stroke-width="1.200"/></svg>
<span class="t" style="left:889.45px;top:122.67px;font-size:12.20px;line-height:12.20px;color:#a6a6a6;transform:scaleX(0.9209);">Karten</span>
<svg class="b" style="left:901.30px;top:141.30px;" width="8" height="6" viewBox="0 0 8 6"><path d="M1 1.500l3 3 3-3" fill="none" stroke="#9a9a9a" stroke-width="1.200"/></svg>
<svg class="b" style="left:945.00px;top:88.00px;" width="31" height="30" viewBox="0 0 31 30"><path d="M27.350 17v-16.350h-26.700v26.700h13" fill="#fafafa" stroke="#3a3a3a" stroke-width="1.300"/><rect x="3.700" y="3.700" width="5" height="4.600" fill="#c8c6c4" stroke="#797775" stroke-width=".900"/><rect x="11.700" y="3.700" width="12.600" height="4.600" fill="#c8c6c4" stroke="#797775" stroke-width=".900"/><rect x="3.700" y="11.700" width="5" height="12.600" fill="#c8c6c4" stroke="#797775" stroke-width=".900"/><rect x="14.500" y="21.500" width="5" height="7.800" fill="#c8c6c4" stroke="#797775" stroke-width="1"/><rect x="19.500" y="14.700" width="5" height="14.600" fill="#fff" stroke="#3a3a3a" stroke-width="1.200"/><rect x="24.500" y="17.700" width="5" height="11.600" fill="#83beec" stroke="#0f6cbd" stroke-width="1.200"/></svg>
<span class="t" style="left:931.20px;top:123.67px;font-size:12.20px;line-height:12.20px;color:#262626;transform:scaleX(0.9762);">PivotChart</span>
<svg class="b" style="left:954.20px;top:142.00px;" width="8" height="6" viewBox="0 0 8 6"><path d="M1 1.500l3 3 3-3" fill="none" stroke="#333" stroke-width="1.200"/></svg>
<span class="t" style="left:802.55px;top:162.57px;font-size:12.20px;line-height:12.20px;color:#262626;transform:scaleX(0.9025);">Diagramme</span>
<svg class="b" style="left:986.00px;top:165.00px;" width="9" height="9" viewBox="0 0 9 9"><path d="M.500 6v-5.500h5.500" fill="none" stroke="#8a8a8a" stroke-width="1"/><path d="M3 3l5 5M8 4.500v3.500h-3.500" fill="none" stroke="#8a8a8a" stroke-width="1"/></svg>
<svg class="b" style="left:1013.00px;top:90.00px;" width="29" height="24" viewBox="0 0 29 24"><path d="M0 4.500h28.300M0 19.500h28.300M4.500 0v24" stroke="#3a3a3a" stroke-width="1.150" fill="none"/><path d="M4.500 11.500l4 4.500 5.500-8 5 8 5.500-8.500 3.800 5" fill="none" stroke="#2f96dd" stroke-width="1.300"/></svg>
<span class="t" style="left:1014.35px;top:122.67px;font-size:12.20px;line-height:12.20px;color:#262626;transform:scaleX(0.9583);">Linie</span>
<svg class="b" style="left:1057.00px;top:90.00px;" width="29" height="24" viewBox="0 0 29 24"><path d="M0 4.500h28.300M0 19.500h28.300M4.500 0v24" stroke="#3a3a3a" stroke-width="1.150" fill="none"/><g fill="#83beec" stroke="#1e8ad6" stroke-width="1"><rect x="7.500" y="12" width="3.300" height="5.500"/><rect x="13.800" y="7.500" width="3.300" height="10"/><rect x="20" y="9.500" width="3.300" height="8"/></g></svg>
<span class="t" style="left:1056.95px;top:122.67px;font-size:12.20px;line-height:12.20px;color:#262626;transform:scaleX(0.8878);">Säule</span>
<svg class="b" style="left:1105.00px;top:90.00px;" width="29" height="24" viewBox="0 0 29 24"><path d="M0 4.500h28.300M0 19.500h28.300M4.500 0v24" stroke="#3a3a3a" stroke-width="1.150" fill="none"/><g fill="#cfe4f7" stroke="#0f6cbd" stroke-width="1.100"><rect x="7.600" y="7.500" width="1.800" height="3.600"/><rect x="11.400" y="7.500" width="1.800" height="3.600"/><rect x="23.600" y="7.500" width="1.800" height="3.600"/></g><g fill="#fff" stroke="#3a3a3a" stroke-width="1.100"><rect x="15.600" y="12.500" width="1.800" height="3.600"/><rect x="19.400" y="12.500" width="1.800" height="3.600"/></g></svg>
<span class="t" style="left:1096.45px;top:122.67px;font-size:12.20px;line-height:12.20px;color:#262626;transform:scaleX(0.9809);">Gewinn/</span>
<span class="t" style="left:1101.15px;top:139.07px;font-size:12.20px;line-height:12.20px;color:#262626;transform:scaleX(0.9250);">Verlust</span>
<span class="t" style="left:1048.20px;top:162.57px;font-size:12.20px;line-height:12.20px;color:#262626;transform:scaleX(0.9200);">Sparklines</span>
<svg class="b" style="left:1182.00px;top:88.00px;" width="31" height="30" viewBox="0 0 31 30"><rect x=".650" y=".650" width="26.700" height="26.700" fill="#fafafa" stroke="#3a3a3a" stroke-width="1.300"/><rect x=".650" y=".650" width="26.700" height="3.600" fill="#c8c6c4" stroke="#3a3a3a" stroke-width="1.100"/><rect x="4.500" y="8.200" width="19" height="5" fill="#83beec" stroke="#0f6cbd" stroke-width="1.100"/><rect x="4.500" y="17.500" width="13" height="4.600" fill="#c8c6c4" stroke="#797775" stroke-width=".900"/><path d="M16 16h13.500l-5 6v7.800h-3.500v-7.800z" fill="#fafafa" stroke="#3a3a3a" stroke-width="1.200" stroke-linejoin="round"/></svg>
<span class="t" style="left:1162.45px;top:122.67px;font-size:12.20px;line-height:12.20px;color:#262626;transform:scaleX(0.9777);">Datenschnitt</span>
<svg class="b" style="left:1247.00px;top:93.00px;" width="31" height="25" viewBox="0 0 31 25"><rect x=".650" y=".650" width="26.700" height="17" fill="#fafafa" stroke="#3a3a3a" stroke-width="1.300"/><rect x=".650" y=".650" width="26.700" height="3.600" fill="#c8c6c4" stroke="#3a3a3a" stroke-width="1.100"/><rect x="3.700" y="8.700" width="4.600" height="4.600" fill="#c8c6c4" stroke="#797775" stroke-width=".900"/><rect x="11.700" y="8.700" width="4.600" height="4.600" fill="#c8c6c4" stroke="#797775" stroke-width=".900"/><path d="M19 9h6" stroke="#797775" stroke-dasharray="2 1.200"/><path d="M16 11h13.500l-5 6v7.800h-3.500v-7.800z" fill="#fafafa" stroke="#3a3a3a" stroke-width="1.200" stroke-linejoin="round"/></svg>
<span class="t" style="left:1235.95px;top:122.67px;font-size:12.20px;line-height:12.20px;color:#262626;transform:scaleX(0.9473);">Zeitachse</span>
<span class="t" style="left:1211.40px;top:162.57px;font-size:12.20px;line-height:12.20px;color:#262626;transform:scaleX(0.9296);">Filter</span>
<svg class="b" style="left:1311.50px;top:91.00px;" width="30" height="22" viewBox="0 0 30 22"><g fill="none" stroke="#4a4a4a" stroke-width="1.300" stroke-linecap="round"><path d="M10.700 13.950H15.150A6.100 6.100 0 0 0 21.250 7.850A6.100 6.100 0 0 0 15.150 1.750H7.350A6.100 6.100 0 0 0 1.250 7.850A6.100 6.100 0 0 0 6.100 13.820"/><path d="M22.900 8.800A6.100 6.100 0 0 1 28.250 14.850A6.100 6.100 0 0 1 22.150 20.950H14.350A6.100 6.100 0 0 1 8.250 14.850A6.100 6.100 0 0 1 14.350 8.750H18.300"/></g></svg>
<span class="t" style="left:1315.10px;top:122.67px;font-size:12.20px;line-height:12.20px;color:#262626;transform:scaleX(0.9741);">Link</span>
<svg class="b" style="left:1321.40px;top:141.30px;" width="8" height="6" viewBox="0 0 8 6"><path d="M1 1.500l3 3 3-3" fill="none" stroke="#333" stroke-width="1.200"/></svg>
<span class="t" style="left:1313.00px;top:162.57px;font-size:12.20px;line-height:12.20px;color:#262626;transform:scaleX(0.8989);">Links</span>
<svg class="b" style="left:1380.50px;top:85.50px;" width="32" height="30" viewBox="0 0 32 30"><rect x="2.700" y="3.500" width="27.700" height="18.700" fill="#fafafa"/><path d="M10 3.500H30.400V22.200H12.300L6 28.800V22.200H2.700V10" fill="none" stroke="#333" stroke-width="1.300"/><path d="M6.300 22.200h5.500l-5.200 5.400z" fill="#fafafa"/><path d="M8.100 .500v15.400M.500 8.100h15.400" stroke="#2fa84f" stroke-width="1.400"/></svg>
<span class="t" style="left:1365.10px;top:122.67px;font-size:12.20px;line-height:12.20px;color:#262626;">Kommentar</span>
<span class="t" style="left:1365.05px;top:162.57px;font-size:12.20px;line-height:12.20px;color:#262626;transform:scaleX(0.9093);">Kommentare</span>
<svg class="b" style="left:1453.50px;top:89.00px;" width="33" height="26" viewBox="0 0 33 26"><rect x="1.500" y="1.500" width="30" height="23" fill="#ececec" stroke="#bdbdbd" stroke-width="1.100"/><g fill="#f4f4f4" stroke="#bdbdbd" stroke-width=".900"><rect x=".500" y=".500" width="2.200" height="2.200"/><rect x="30.300" y=".500" width="2.200" height="2.200"/><rect x=".500" y="23.300" width="2.200" height="2.200"/><rect x="30.300" y="23.300" width="2.200" height="2.200"/></g><path d="M10.800 19.500l5.700-14 5.700 14M12.800 14.800h7.400" fill="none" stroke="#c4c4c4" stroke-width="1.400"/></svg>
<span class="t" style="left:1449.30px;top:123.67px;font-size:12.20px;line-height:12.20px;color:#a6a6a6;transform:scaleX(0.9562);">Textfeld</span>
<svg class="b" style="left:1465.10px;top:142.00px;" width="8" height="6" viewBox="0 0 8 6"><path d="M1 1.500l3 3 3-3" fill="none" stroke="#9a9a9a" stroke-width="1.200"/></svg>
<svg class="b" style="left:1512.50px;top:87.50px;" width="22" height="29" viewBox="0 0 22 29"><path d="M.650 .650h13.350l7 7v20.350h-20.350z" fill="#fafafa" stroke="#262626" stroke-width="1.300" stroke-linejoin="miter"/><path d="M14 .650v7h7" fill="none" stroke="#262626" stroke-width="1.200"/><rect x="4.500" y="4.500" width="8" height="4" fill="#f8d48b" stroke="#e3730a" stroke-width="1.100"/><rect x="4.500" y="19.500" width="12.500" height="4" fill="#f8d48b" stroke="#e3730a" stroke-width="1.100"/></svg>
<span class="t" style="left:1497.40px;top:122.67px;font-size:12.20px;line-height:12.20px;color:#262626;transform:scaleX(1.0057);">Kopf- und</span>
<span class="t" style="left:1503.50px;top:139.07px;font-size:12.20px;line-height:12.20px;color:#262626;transform:scaleX(0.9064);">Fußzeile</span>
<svg class="b" style="left:1568.50px;top:87.50px;" width="26" height="29" viewBox="0 0 26 29"><path d="M1.500 18l21-16.500-4 25.500M7.500 13.500l13 4.500" fill="none" stroke="#bdbdbd" stroke-width="2" stroke-linejoin="round" stroke-linecap="round"/></svg>
<span class="t" style="left:1558.25px;top:122.67px;font-size:12.20px;line-height:12.20px;color:#a6a6a6;">WordArt</span>
<svg class="b" style="left:1576.30px;top:141.30px;" width="8" height="6" viewBox="0 0 8 6"><path d="M1 1.500l3 3 3-3" fill="none" stroke="#9a9a9a" stroke-width="1.200"/></svg>
<svg class="b" style="left:1632.50px;top:87.50px;" width="29" height="29" viewBox="0 0 29 29"><path d="M.650 .650h13.350l7 7v20.350h-20.350z" fill="#fafafa" stroke="#262626" stroke-width="1.300"/><path d="M14 .650v7h7" fill="none" stroke="#262626" stroke-width="1.200"/><path d="M7.500 22l1.200-5 15-13.500a2 2 0 0 1 3 3l-14.200 14.300z" fill="#fff" stroke="#2f96dd" stroke-width="1.300" stroke-linejoin="round"/><path d="M7.500 22l1.200-5 3.800 4z" fill="#2f96dd"/><path d="M3.500 24.500h15" stroke="#2f96dd" stroke-width="1.200"/></svg>
<span class="t" style="left:1609.95px;top:123.67px;font-size:12.20px;line-height:12.20px;color:#262626;transform:scaleX(0.9571);">Signaturzeile</span>
<svg class="b" style="left:1639.30px;top:142.00px;" width="8" height="6" viewBox="0 0 8 6"><path d="M1 1.500l3 3 3-3" fill="none" stroke="#333" stroke-width="1.200"/></svg>
<svg class="b" style="left:1686.50px;top:87.50px;" width="28" height="29" viewBox="0 0 28 29"><rect x="6" y=".650" width="21" height="27.300" fill="#fafafa" stroke="#262626" stroke-width="1.300"/><rect x=".650" y="6.600" width="14.500" height="13.500" fill="#fff" stroke="#0f6cbd" stroke-width="1.300"/><rect x=".650" y="6.600" width="14.500" height="3" fill="#83beec" stroke="#0f6cbd" stroke-width="1.100"/></svg>
<span class="t" style="left:1685.40px;top:122.67px;font-size:12.20px;line-height:12.20px;color:#262626;transform:scaleX(0.9757);">Objekt</span>
<span class="t" style="left:1575.80px;top:162.57px;font-size:12.20px;line-height:12.20px;color:#262626;transform:scaleX(0.8492);">Text</span>
<svg class="b" style="left:1748.00px;top:90.50px;" width="26" height="23" viewBox="0 0 26 23"><path d="M.500 1.500h24.500M8 1.500v14.500c0 3.500-1.500 5.500-5 5.500M17.500 1.500v16c0 3 2 4 5.500 3.300" fill="none" stroke="#b9b9b9" stroke-width="1.500"/></svg>
<span class="t" style="left:1742.30px;top:122.67px;font-size:12.20px;line-height:12.20px;color:#a6a6a6;transform:scaleX(0.9485);">Formel</span>
<svg class="b" style="left:1756.30px;top:141.30px;" width="8" height="6" viewBox="0 0 8 6"><path d="M1 1.500l3 3 3-3" fill="none" stroke="#9a9a9a" stroke-width="1.200"/></svg>
<svg class="b" style="left:1792.50px;top:89.50px;" width="26" height="25" viewBox="0 0 26 25"><path d="M1 23.300h8.500v-1.800c-3.500-2.300-6-5.800-6-10.300 0-5.800 4-9.700 9.300-9.700s9.300 3.900 9.300 9.700c0 4.500-2.500 8-6 10.300v1.800h8.500" fill="none" stroke="#3a3a3a" stroke-width="1.600"/></svg>
<span class="t" style="left:1786.30px;top:122.67px;font-size:12.20px;line-height:12.20px;color:#262626;transform:scaleX(0.9685);">Symbol</span>
<span class="t" style="left:1762.85px;top:162.57px;font-size:12.20px;line-height:12.20px;color:#262626;transform:scaleX(0.9038);">Symbole</span>
<div class="b" style="left:0.00px;top:300.00px;width:1222.50px;height:20.00px;background:#f0f0f0;"></div>
<div class="b" style="left:25.00px;top:320.00px;width:1197.50px;height:1258.00px;background:#fff;"></div>
<div class="b" style="left:0.00px;top:320.00px;width:25.00px;height:1258.00px;background:#f0f0f0;"></div>
<div class="b" style="left:217.90px;top:320.00px;width:1.00px;height:1258.00px;background:#e1e1e1;"></div>
<div class="b" style="left:217.90px;top:302.00px;width:1.00px;height:18.00px;background:#c4c4c4;"></div>
<div class="b" style="left:846.00px;top:320.00px;width:1.00px;height:1258.00px;background:#e1e1e1;"></div>
<div class="b" style="left:846.00px;top:302.00px;width:1.00px;height:18.00px;background:#c4c4c4;"></div>
<div class="b" style="left:1039.80px;top:320.00px;width:1.00px;height:1258.00px;background:#e1e1e1;"></div>
<div class="b" style="left:1039.80px;top:302.00px;width:1.00px;height:18.00px;background:#c4c4c4;"></div>
<div class="b" style="left:1119.70px;top:320.00px;width:1.00px;height:1258.00px;background:#e1e1e1;"></div>
<div class="b" style="left:1119.70px;top:302.00px;width:1.00px;height:18.00px;background:#c4c4c4;"></div>
<div class="b" style="left:1199.90px;top:320.00px;width:1.00px;height:1258.00px;background:#e1e1e1;"></div>
<div class="b" style="left:1199.90px;top:302.00px;width:1.00px;height:18.00px;background:#c4c4c4;"></div>
<div class="b" style="left:24.80px;top:320.00px;width:1.00px;height:1258.00px;background:#a6a6a6;"></div>
<div class="b" style="left:0.00px;top:319.00px;width:1222.50px;height:1.00px;background:#9a9a9a;"></div>
<div class="b" style="left:25.00px;top:339.00px;width:1197.50px;height:1.00px;background:#e1e1e1;"></div>
<div class="b" style="left:0.00px;top:339.00px;width:25.00px;height:1.00px;background:#b4b4b4;"></div>
<div class="b" style="left:25.00px;top:359.00px;width:1197.50px;height:1.00px;background:#e1e1e1;"></div>
<div class="b" style="left:0.00px;top:359.00px;width:25.00px;height:1.00px;background:#b4b4b4;"></div>
<div class="b" style="left:25.00px;top:379.00px;width:1197.50px;height:1.00px;background:#e1e1e1;"></div>
<div class="b" style="left:0.00px;top:379.00px;width:25.00px;height:1.00px;background:#b4b4b4;"></div>
<div class="b" style="left:25.00px;top:399.00px;width:1197.50px;height:1.00px;background:#e1e1e1;"></div>
<div class="b" style="left:0.00px;top:399.00px;width:25.00px;height:1.00px;background:#b4b4b4;"></div>
<div class="b" style="left:25.00px;top:419.00px;width:1197.50px;height:1.00px;background:#e1e1e1;"></div>
<div class="b" style="left:0.00px;top:419.00px;width:25.00px;height:1.00px;background:#b4b4b4;"></div>
<div class="b" style="left:25.00px;top:439.00px;width:1197.50px;height:1.00px;background:#e1e1e1;"></div>
<div class="b" style="left:0.00px;top:439.00px;width:25.00px;height:1.00px;background:#b4b4b4;"></div>
<div class="b" style="left:25.00px;top:459.00px;width:1197.50px;height:1.00px;background:#e1e1e1;"></div>
<div class="b" style="left:0.00px;top:459.00px;width:25.00px;height:1.00px;background:#b4b4b4;"></div>
<div class="b" style="left:25.00px;top:479.00px;width:1197.50px;height:1.00px;background:#e1e1e1;"></div>
<div class="b" style="left:0.00px;top:479.00px;width:25.00px;height:1.00px;background:#b4b4b4;"></div>
<div class="b" style="left:25.00px;top:499.00px;width:1197.50px;height:1.00px;background:#e1e1e1;"></div>
<div class="b" style="left:0.00px;top:499.00px;width:25.00px;height:1.00px;background:#b4b4b4;"></div>
<div class="b" style="left:25.00px;top:519.00px;width:1197.50px;height:1.00px;background:#e1e1e1;"></div>
<div class="b" style="left:0.00px;top:519.00px;width:25.00px;height:1.00px;background:#b4b4b4;"></div>
<div class="b" style="left:25.00px;top:539.00px;width:1197.50px;height:1.00px;background:#e1e1e1;"></div>
<div class="b" style="left:0.00px;top:539.00px;width:25.00px;height:1.00px;background:#b4b4b4;"></div>
<div class="b" style="left:25.00px;top:559.00px;width:1197.50px;height:1.00px;background:#e1e1e1;"></div>
<div class="b" style="left:0.00px;top:559.00px;width:25.00px;height:1.00px;background:#b4b4b4;"></div>
<div class="b" style="left:25.00px;top:579.00px;width:1197.50px;height:1.00px;background:#e1e1e1;"></div>
<div class="b" style="left:0.00px;top:579.00px;width:25.00px;height:1.00px;background:#b4b4b4;"></div>
<div class="b" style="left:25.00px;top:599.00px;width:1197.50px;height:1.00px;background:#e1e1e1;"></div>
<div class="b" style="left:0.00px;top:599.00px;width:25.00px;height:1.00px;background:#b4b4b4;"></div>
<div class="b" style="left:25.00px;top:619.00px;width:1197.50px;height:1.00px;background:#e1e1e1;"></div>
<div class="b" style="left:0.00px;top:619.00px;width:25.00px;height:1.00px;background:#b4b4b4;"></div>
<div class="b" style="left:25.00px;top:639.00px;width:1197.50px;height:1.00px;background:#e1e1e1;"></div>
<div class="b" style="left:0.00px;top:639.00px;width:25.00px;height:1.00px;background:#b4b4b4;"></div>
<div class="b" style="left:25.00px;top:659.00px;width:1197.50px;height:1.00px;background:#e1e1e1;"></div>
<div class="b" style="left:0.00px;top:659.00px;width:25.00px;height:1.00px;background:#b4b4b4;"></div>
<div class="b" style="left:25.00px;top:679.00px;width:1197.50px;height:1.00px;background:#e1e1e1;"></div>
<div class="b" style="left:0.00px;top:679.00px;width:25.00px;height:1.00px;background:#b4b4b4;"></div>
<div class="b" style="left:25.00px;top:699.00px;width:1197.50px;height:1.00px;background:#e1e1e1;"></div>
<div class="b" style="left:0.00px;top:699.00px;width:25.00px;height:1.00px;background:#b4b4b4;"></div>
<div class="b" style="left:25.00px;top:719.00px;width:1197.50px;height:1.00px;background:#e1e1e1;"></div>
<div class="b" style="left:0.00px;top:719.00px;width:25.00px;height:1.00px;background:#b4b4b4;"></div>
<div class="b" style="left:25.00px;top:739.00px;width:1197.50px;height:1.00px;background:#e1e1e1;"></div>
<div class="b" style="left:0.00px;top:739.00px;width:25.00px;height:1.00px;background:#b4b4b4;"></div>
<div class="b" style="left:25.00px;top:759.00px;width:1197.50px;height:1.00px;background:#e1e1e1;"></div>
<div class="b" style="left:0.00px;top:759.00px;width:25.00px;height:1.00px;background:#b4b4b4;"></div>
<div class="b" style="left:25.00px;top:779.00px;width:1197.50px;height:1.00px;background:#e1e1e1;"></div>
<div class="b" style="left:0.00px;top:779.00px;width:25.00px;height:1.00px;background:#b4b4b4;"></div>
<div class="b" style="left:25.00px;top:799.00px;width:1197.50px;height:1.00px;background:#e1e1e1;"></div>
<div class="b" style="left:0.00px;top:799.00px;width:25.00px;height:1.00px;background:#b4b4b4;"></div>
<div class="b" style="left:25.00px;top:819.00px;width:1197.50px;height:1.00px;background:#e1e1e1;"></div>
<div class="b" style="left:0.00px;top:819.00px;width:25.00px;height:1.00px;background:#b4b4b4;"></div>
<div class="b" style="left:25.00px;top:839.00px;width:1197.50px;height:1.00px;background:#e1e1e1;"></div>
<div class="b" style="left:0.00px;top:839.00px;width:25.00px;height:1.00px;background:#b4b4b4;"></div>
<div class="b" style="left:25.00px;top:859.00px;width:1197.50px;height:1.00px;background:#e1e1e1;"></div>
<div class="b" style="left:0.00px;top:859.00px;width:25.00px;height:1.00px;background:#b4b4b4;"></div>
<div class="b" style="left:25.00px;top:879.00px;width:1197.50px;height:1.00px;background:#e1e1e1;"></div>
<div class="b" style="left:0.00px;top:879.00px;width:25.00px;height:1.00px;background:#b4b4b4;"></div>
<div class="b" style="left:25.00px;top:899.00px;width:1197.50px;height:1.00px;background:#e1e1e1;"></div>
<div class="b" style="left:0.00px;top:899.00px;width:25.00px;height:1.00px;background:#b4b4b4;"></div>
<div class="b" style="left:25.00px;top:919.00px;width:1197.50px;height:1.00px;background:#e1e1e1;"></div>
<div class="b" style="left:0.00px;top:919.00px;width:25.00px;height:1.00px;background:#b4b4b4;"></div>
<div class="b" style="left:25.00px;top:939.00px;width:1197.50px;height:1.00px;background:#e1e1e1;"></div>
<div class="b" style="left:0.00px;top:939.00px;width:25.00px;height:1.00px;background:#b4b4b4;"></div>
<div class="b" style="left:25.00px;top:959.00px;width:1197.50px;height:1.00px;background:#e1e1e1;"></div>
<div class="b" style="left:0.00px;top:959.00px;width:25.00px;height:1.00px;background:#b4b4b4;"></div>
<div class="b" style="left:25.00px;top:979.00px;width:1197.50px;height:1.00px;background:#e1e1e1;"></div>
<div class="b" style="left:0.00px;top:979.00px;width:25.00px;height:1.00px;background:#b4b4b4;"></div>
<div class="b" style="left:25.00px;top:999.00px;width:1197.50px;height:1.00px;background:#e1e1e1;"></div>
<div class="b" style="left:0.00px;top:999.00px;width:25.00px;height:1.00px;background:#b4b4b4;"></div>
<div class="b" style="left:25.00px;top:1019.00px;width:1197.50px;height:1.00px;background:#e1e1e1;"></div>
<div class="b" style="left:0.00px;top:1019.00px;width:25.00px;height:1.00px;background:#b4b4b4;"></div>
<div class="b" style="left:25.00px;top:1039.00px;width:1197.50px;height:1.00px;background:#e1e1e1;"></div>
<div class="b" style="left:0.00px;top:1039.00px;width:25.00px;height:1.00px;background:#b4b4b4;"></div>
<div class="b" style="left:25.00px;top:1059.00px;width:1197.50px;height:1.00px;background:#e1e1e1;"></div>
<div class="b" style="left:0.00px;top:1059.00px;width:25.00px;height:1.00px;background:#b4b4b4;"></div>
<div class="b" style="left:25.00px;top:1079.00px;width:1197.50px;height:1.00px;background:#e1e1e1;"></div>
<div class="b" style="left:0.00px;top:1079.00px;width:25.00px;height:1.00px;background:#b4b4b4;"></div>
<div class="b" style="left:25.00px;top:1099.00px;width:1197.50px;height:1.00px;background:#e1e1e1;"></div>
<div class="b" style="left:0.00px;top:1099.00px;width:25.00px;height:1.00px;background:#b4b4b4;"></div>
<div class="b" style="left:25.00px;top:1119.00px;width:1197.50px;height:1.00px;background:#e1e1e1;"></div>
<div class="b" style="left:0.00px;top:1119.00px;width:25.00px;height:1.00px;background:#b4b4b4;"></div>
<div class="b" style="left:25.00px;top:1139.00px;width:1197.50px;height:1.00px;background:#e1e1e1;"></div>
<div class="b" style="left:0.00px;top:1139.00px;width:25.00px;height:1.00px;background:#b4b4b4;"></div>
<div class="b" style="left:25.00px;top:1159.00px;width:1197.50px;height:1.00px;background:#e1e1e1;"></div>
<div class="b" style="left:0.00px;top:1159.00px;width:25.00px;height:1.00px;background:#b4b4b4;"></div>
<div class="b" style="left:25.00px;top:1179.00px;width:1197.50px;height:1.00px;background:#e1e1e1;"></div>
<div class="b" style="left:0.00px;top:1179.00px;width:25.00px;height:1.00px;background:#b4b4b4;"></div>
<div class="b" style="left:25.00px;top:1199.00px;width:1197.50px;height:1.00px;background:#e1e1e1;"></div>
<div class="b" style="left:0.00px;top:1199.00px;width:25.00px;height:1.00px;background:#b4b4b4;"></div>
<div class="b" style="left:25.00px;top:1219.00px;width:1197.50px;height:1.00px;background:#e1e1e1;"></div>
<div class="b" style="left:0.00px;top:1219.00px;width:25.00px;height:1.00px;background:#b4b4b4;"></div>
<div class="b" style="left:25.00px;top:1239.00px;width:1197.50px;height:1.00px;background:#e1e1e1;"></div>
<div class="b" style="left:0.00px;top:1239.00px;width:25.00px;height:1.00px;background:#b4b4b4;"></div>
<div class="b" style="left:25.00px;top:1259.00px;width:1197.50px;height:1.00px;background:#e1e1e1;"></div>
<div class="b" style="left:0.00px;top:1259.00px;width:25.00px;height:1.00px;background:#b4b4b4;"></div>
<div class="b" style="left:25.00px;top:1279.00px;width:1197.50px;height:1.00px;background:#e1e1e1;"></div>
<div class="b" style="left:0.00px;top:1279.00px;width:25.00px;height:1.00px;background:#b4b4b4;"></div>
<div class="b" style="left:25.00px;top:1299.00px;width:1197.50px;height:1.00px;background:#e1e1e1;"></div>
<div class="b" style="left:0.00px;top:1299.00px;width:25.00px;height:1.00px;background:#b4b4b4;"></div>
<div class="b" style="left:25.00px;top:1319.00px;width:1197.50px;height:1.00px;background:#e1e1e1;"></div>
<div class="b" style="left:0.00px;top:1319.00px;width:25.00px;height:1.00px;background:#b4b4b4;"></div>
<div class="b" style="left:25.00px;top:1339.00px;width:1197.50px;height:1.00px;background:#e1e1e1;"></div>
<div class="b" style="left:0.00px;top:1339.00px;width:25.00px;height:1.00px;background:#b4b4b4;"></div>
<div class="b" style="left:25.00px;top:1359.00px;width:1197.50px;height:1.00px;background:#e1e1e1;"></div>
<div class="b" style="left:0.00px;top:1359.00px;width:25.00px;height:1.00px;background:#b4b4b4;"></div>
<div class="b" style="left:25.00px;top:1379.00px;width:1197.50px;height:1.00px;background:#e1e1e1;"></div>
<div class="b" style="left:0.00px;top:1379.00px;width:25.00px;height:1.00px;background:#b4b4b4;"></div>
<div class="b" style="left:25.00px;top:1399.00px;width:1197.50px;height:1.00px;background:#e1e1e1;"></div>
<div class="b" style="left:0.00px;top:1399.00px;width:25.00px;height:1.00px;background:#b4b4b4;"></div>
<div class="b" style="left:25.00px;top:1419.00px;width:1197.50px;height:1.00px;background:#e1e1e1;"></div>
<div class="b" style="left:0.00px;top:1419.00px;width:25.00px;height:1.00px;background:#b4b4b4;"></div>
<div class="b" style="left:25.00px;top:1439.00px;width:1197.50px;height:1.00px;background:#e1e1e1;"></div>
<div class="b" style="left:0.00px;top:1439.00px;width:25.00px;height:1.00px;background:#b4b4b4;"></div>
<div class="b" style="left:25.00px;top:1459.00px;width:1197.50px;height:1.00px;background:#e1e1e1;"></div>
<div class="b" style="left:0.00px;top:1459.00px;width:25.00px;height:1.00px;background:#b4b4b4;"></div>
<div class="b" style="left:25.00px;top:1479.00px;width:1197.50px;height:1.00px;background:#e1e1e1;"></div>
<div class="b" style="left:0.00px;top:1479.00px;width:25.00px;height:1.00px;background:#b4b4b4;"></div>
<div class="b" style="left:25.00px;top:1499.00px;width:1197.50px;height:1.00px;background:#e1e1e1;"></div>
<div class="b" style="left:0.00px;top:1499.00px;width:25.00px;height:1.00px;background:#b4b4b4;"></div>
<div class="b" style="left:25.00px;top:1519.00px;width:1197.50px;height:1.00px;background:#e1e1e1;"></div>
<div class="b" style="left:0.00px;top:1519.00px;width:25.00px;height:1.00px;background:#b4b4b4;"></div>
<div class="b" style="left:25.00px;top:1539.00px;width:1197.50px;height:1.00px;background:#e1e1e1;"></div>
<div class="b" style="left:0.00px;top:1539.00px;width:25.00px;height:1.00px;background:#b4b4b4;"></div>
<div class="b" style="left:25.00px;top:1559.00px;width:1197.50px;height:1.00px;background:#e1e1e1;"></div>
<div class="b" style="left:0.00px;top:1559.00px;width:25.00px;height:1.00px;background:#b4b4b4;"></div>
<div class="b" style="left:25.00px;top:1579.00px;width:1197.50px;height:1.00px;background:#e1e1e1;"></div>
<div class="b" style="left:0.00px;top:1579.00px;width:25.00px;height:1.00px;background:#b4b4b4;"></div>
<svg class="b" style="left:9.50px;top:304.50px;" width="15" height="14" viewBox="0 0 15 14"><path d="M14.500 .500v13h-14z" fill="#b5b5b5"/></svg>
<div class="b" style="left:23.80px;top:317.50px;width:2.00px;height:2.00px;background:#107C41;"></div>
<span class="t" style="left:117.54px;top:302.93px;font-size:14.50px;line-height:14.50px;color:#333;transform:scaleX(0.8800);">A</span>
<span class="t" style="left:528.14px;top:302.93px;font-size:14.50px;line-height:14.50px;color:#333;transform:scaleX(0.8800);">B</span>
<span class="t" style="left:938.79px;top:302.93px;font-size:14.50px;line-height:14.50px;color:#333;transform:scaleX(0.8800);">C</span>
<span class="t" style="left:1075.59px;top:302.93px;font-size:14.50px;line-height:14.50px;color:#333;transform:scaleX(0.8800);">D</span>
<span class="t" style="left:1156.04px;top:302.93px;font-size:14.50px;line-height:14.50px;color:#333;transform:scaleX(0.8800);">E</span>
<span class="t" style="left:8.75px;top:322.83px;font-size:14.50px;line-height:14.50px;color:#333;transform:scaleX(0.8800);">1</span>
<span class="t" style="left:27.70px;top:322.83px;font-size:14.50px;line-height:14.50px;color:#111;transform:scaleX(0.9796);">GlobalId</span>
<span class="t" style="left:221.30px;top:322.83px;font-size:14.50px;line-height:14.50px;color:#111;transform:scaleX(0.9567);">Name</span>
<span class="t" style="left:849.00px;top:322.83px;font-size:14.50px;line-height:14.50px;color:#111;transform:scaleX(0.9286);">ObjectType</span>
<span class="t" style="left:8.75px;top:342.83px;font-size:14.50px;line-height:14.50px;color:#333;transform:scaleX(0.8800);">2</span>
<span class="t c" style="left:27.70px;top:342.83px;font-size:14.50px;line-height:14.50px;color:#111;transform:scaleX(0.8890);">1qc5HjZvrCsga38tqxQ3VC</span>
<span class="t c" style="left:221.30px;top:342.83px;font-size:14.50px;line-height:14.50px;color:#111;transform:scaleX(0.8950);">M_Double-Flush:1730 x 2134mm:1730 x 2134mm:367888</span>
<span class="t c" style="left:849.00px;top:342.83px;font-size:14.50px;line-height:14.50px;color:#111;transform:scaleX(0.8830);">1730 x 2134mm</span>
<span class="t" style="left:8.75px;top:362.83px;font-size:14.50px;line-height:14.50px;color:#333;transform:scaleX(0.8800);">3</span>
<span class="t c" style="left:27.70px;top:362.83px;font-size:14.50px;line-height:14.50px;color:#111;transform:scaleX(0.8890);">1byTDaqS91rBnWJlv$n$m2</span>
<span class="t c" style="left:221.30px;top:362.83px;font-size:14.50px;line-height:14.50px;color:#111;transform:scaleX(0.8950);">M_Single-Flush:0915 x 2134mm:0915 x 2134mm:229736</span>
<span class="t c" style="left:849.00px;top:362.83px;font-size:14.50px;line-height:14.50px;color:#111;transform:scaleX(0.8830);">0915 x 2134mm</span>
<span class="t" style="left:8.75px;top:382.83px;font-size:14.50px;line-height:14.50px;color:#333;transform:scaleX(0.8800);">4</span>
<span class="t c" style="left:27.70px;top:382.83px;font-size:14.50px;line-height:14.50px;color:#111;transform:scaleX(0.8890);">35QeWibpT4DfyH3NIf2nTY</span>
<span class="t c" style="left:221.30px;top:382.83px;font-size:14.50px;line-height:14.50px;color:#111;transform:scaleX(0.8950);">M_Single-Flush:0915 x 2134mm:0915 x 2134mm:237881</span>
<span class="t c" style="left:849.00px;top:382.83px;font-size:14.50px;line-height:14.50px;color:#111;transform:scaleX(0.8830);">0915 x 2134mm</span>
<span class="t" style="left:8.75px;top:402.83px;font-size:14.50px;line-height:14.50px;color:#333;transform:scaleX(0.8800);">5</span>
<span class="t c" style="left:27.70px;top:402.83px;font-size:14.50px;line-height:14.50px;color:#111;transform:scaleX(0.8890);">1byTDaqS91rBnWJlv$nn72</span>
<span class="t c" style="left:221.30px;top:402.83px;font-size:14.50px;line-height:14.50px;color:#111;transform:scaleX(0.8950);">M_Single-Flush:0915 x 2134mm:0915 x 2134mm:224424</span>
<span class="t c" style="left:849.00px;top:402.83px;font-size:14.50px;line-height:14.50px;color:#111;transform:scaleX(0.8830);">0915 x 2134mm</span>
<span class="t" style="left:8.75px;top:422.83px;font-size:14.50px;line-height:14.50px;color:#333;transform:scaleX(0.8800);">6</span>
<span class="t c" style="left:27.70px;top:422.83px;font-size:14.50px;line-height:14.50px;color:#111;transform:scaleX(0.8890);">35QeWibpT4DfyH3NIf2sUZ</span>
<span class="t c" style="left:221.30px;top:422.83px;font-size:14.50px;line-height:14.50px;color:#111;transform:scaleX(0.8950);">M_Double-Flush:1830 x 2134mm:1830 x 2134mm:250360</span>
<span class="t c" style="left:849.00px;top:422.83px;font-size:14.50px;line-height:14.50px;color:#111;transform:scaleX(0.8830);">1830 x 2134mm</span>
<span class="t" style="left:8.75px;top:442.83px;font-size:14.50px;line-height:14.50px;color:#333;transform:scaleX(0.8800);">7</span>
<span class="t c" style="left:27.70px;top:442.83px;font-size:14.50px;line-height:14.50px;color:#111;transform:scaleX(0.8890);">1byTDaqS91rBnWJlv$nnIo</span>
<span class="t c" style="left:221.30px;top:442.83px;font-size:14.50px;line-height:14.50px;color:#111;transform:scaleX(0.8950);">M_Single-Flush:0915 x 2134mm:0915 x 2134mm:223704</span>
<span class="t c" style="left:849.00px;top:442.83px;font-size:14.50px;line-height:14.50px;color:#111;transform:scaleX(0.8830);">0915 x 2134mm</span>
<span class="t" style="left:8.75px;top:462.83px;font-size:14.50px;line-height:14.50px;color:#333;transform:scaleX(0.8800);">8</span>
<span class="t c" style="left:27.70px;top:462.83px;font-size:14.50px;line-height:14.50px;color:#111;transform:scaleX(0.8890);">1byTDaqS91rBnWJlv$nmAj</span>
<span class="t c" style="left:221.30px;top:462.83px;font-size:14.50px;line-height:14.50px;color:#111;transform:scaleX(0.8950);">M_Single-Flush:0915 x 2134mm:0915 x 2134mm:229319</span>
<span class="t c" style="left:849.00px;top:462.83px;font-size:14.50px;line-height:14.50px;color:#111;transform:scaleX(0.8830);">0915 x 2134mm</span>
<span class="t" style="left:8.75px;top:482.83px;font-size:14.50px;line-height:14.50px;color:#333;transform:scaleX(0.8800);">9</span>
<span class="t c" style="left:27.70px;top:482.83px;font-size:14.50px;line-height:14.50px;color:#111;transform:scaleX(0.8890);">35QeWibpT4DfyH3NIf2mPA</span>
<span class="t c" style="left:221.30px;top:482.83px;font-size:14.50px;line-height:14.50px;color:#111;transform:scaleX(0.8950);">M_Single-Flush:0915 x 2134mm:0915 x 2134mm:241681</span>
<span class="t c" style="left:849.00px;top:482.83px;font-size:14.50px;line-height:14.50px;color:#111;transform:scaleX(0.8830);">0915 x 2134mm</span>
<span class="t" style="left:5.20px;top:502.83px;font-size:14.50px;line-height:14.50px;color:#333;transform:scaleX(0.8800);">10</span>
<span class="t c" style="left:27.70px;top:502.83px;font-size:14.50px;line-height:14.50px;color:#111;transform:scaleX(0.8890);">1byTDaqS91rBnWJlv$nnkx</span>
<span class="t c" style="left:221.30px;top:502.83px;font-size:14.50px;line-height:14.50px;color:#111;transform:scaleX(0.8950);">M_Single-Flush:0915 x 2134mm:0915 x 2134mm:222929</span>
<span class="t c" style="left:849.00px;top:502.83px;font-size:14.50px;line-height:14.50px;color:#111;transform:scaleX(0.8830);">0915 x 2134mm</span>
<span class="t" style="left:5.68px;top:522.83px;font-size:14.50px;line-height:14.50px;color:#333;transform:scaleX(0.8800);">11</span>
<span class="t c" style="left:27.70px;top:522.83px;font-size:14.50px;line-height:14.50px;color:#111;transform:scaleX(0.8890);">1byTDaqS91rBnWJlv$nn54</span>
<span class="t c" style="left:221.30px;top:522.83px;font-size:14.50px;line-height:14.50px;color:#111;transform:scaleX(0.8950);">M_Single-Flush:0915 x 2134mm:0915 x 2134mm:224302</span>
<span class="t c" style="left:849.00px;top:522.83px;font-size:14.50px;line-height:14.50px;color:#111;transform:scaleX(0.8830);">0915 x 2134mm</span>
<span class="t" style="left:5.20px;top:542.83px;font-size:14.50px;line-height:14.50px;color:#333;transform:scaleX(0.8800);">12</span>
<span class="t c" style="left:27.70px;top:542.83px;font-size:14.50px;line-height:14.50px;color:#111;transform:scaleX(0.8890);">0tIhQ6hmz02e5gznEed7$9</span>
<span class="t c" style="left:221.30px;top:542.83px;font-size:14.50px;line-height:14.50px;color:#111;transform:scaleX(0.8950);">M_Single-Flush:0915 x 2134mm:0915 x 2134mm:350102</span>
<span class="t c" style="left:849.00px;top:542.83px;font-size:14.50px;line-height:14.50px;color:#111;transform:scaleX(0.8830);">0915 x 2134mm</span>
<span class="t" style="left:5.20px;top:562.83px;font-size:14.50px;line-height:14.50px;color:#333;transform:scaleX(0.8800);">13</span>
<span class="t c" style="left:27.70px;top:562.83px;font-size:14.50px;line-height:14.50px;color:#111;transform:scaleX(0.8890);">1byTDaqS91rBnWJlv$nnW1</span>
<span class="t c" style="left:221.30px;top:562.83px;font-size:14.50px;line-height:14.50px;color:#111;transform:scaleX(0.8950);">M_Single-Flush:0915 x 2134mm Rated:0915 x 2134mm Rated:222571</span>
<span class="t c" style="left:849.00px;top:562.83px;font-size:14.50px;line-height:14.50px;color:#111;transform:scaleX(0.8830);">0915 x 2134mm Rated</span>
<span class="t" style="left:5.20px;top:582.83px;font-size:14.50px;line-height:14.50px;color:#333;transform:scaleX(0.8800);">14</span>
<span class="t c" style="left:27.70px;top:582.83px;font-size:14.50px;line-height:14.50px;color:#111;transform:scaleX(0.8890);">35QeWibpT4DfyH3NIf2sIn</span>
<span class="t c" style="left:221.30px;top:582.83px;font-size:14.50px;line-height:14.50px;color:#111;transform:scaleX(0.8950);">M_Single-Flush:0915 x 2134mm:0915 x 2134mm:250602</span>
<span class="t c" style="left:849.00px;top:582.83px;font-size:14.50px;line-height:14.50px;color:#111;transform:scaleX(0.8830);">0915 x 2134mm</span>
<span class="t" style="left:5.20px;top:602.83px;font-size:14.50px;line-height:14.50px;color:#333;transform:scaleX(0.8800);">15</span>
<span class="t c" style="left:27.70px;top:602.83px;font-size:14.50px;line-height:14.50px;color:#111;transform:scaleX(0.8890);">1byTDaqS91rBnWJlv$nm9F</span>
<span class="t c" style="left:221.30px;top:602.83px;font-size:14.50px;line-height:14.50px;color:#111;transform:scaleX(0.8950);">M_Single-Flush:0915 x 2134mm:0915 x 2134mm:229157</span>
<span class="t c" style="left:849.00px;top:602.83px;font-size:14.50px;line-height:14.50px;color:#111;transform:scaleX(0.8830);">0915 x 2134mm</span>
<span class="t" style="left:5.20px;top:622.83px;font-size:14.50px;line-height:14.50px;color:#333;transform:scaleX(0.8800);">16</span>
<span class="t c" style="left:27.70px;top:622.83px;font-size:14.50px;line-height:14.50px;color:#111;transform:scaleX(0.8890);">1byTDaqS91rBnWJlv$nnu8</span>
<span class="t c" style="left:221.30px;top:622.83px;font-size:14.50px;line-height:14.50px;color:#111;transform:scaleX(0.8950);">M_Single-Flush:0915 x 2134mm:0915 x 2134mm:222050</span>
<span class="t c" style="left:849.00px;top:622.83px;font-size:14.50px;line-height:14.50px;color:#111;transform:scaleX(0.8830);">0915 x 2134mm</span>
<span class="t" style="left:5.20px;top:642.83px;font-size:14.50px;line-height:14.50px;color:#333;transform:scaleX(0.8800);">17</span>
<span class="t c" style="left:27.70px;top:642.83px;font-size:14.50px;line-height:14.50px;color:#111;transform:scaleX(0.8890);">1byTDaqS91rBnWJlv$nn_r</span>
<span class="t c" style="left:221.30px;top:642.83px;font-size:14.50px;line-height:14.50px;color:#111;transform:scaleX(0.8950);">M_Single-Flush:0915 x 2134mm:0915 x 2134mm:221919</span>
<span class="t c" style="left:849.00px;top:642.83px;font-size:14.50px;line-height:14.50px;color:#111;transform:scaleX(0.8830);">0915 x 2134mm</span>
<span class="t" style="left:5.20px;top:662.83px;font-size:14.50px;line-height:14.50px;color:#333;transform:scaleX(0.8800);">18</span>
<span class="t c" style="left:27.70px;top:662.83px;font-size:14.50px;line-height:14.50px;color:#111;transform:scaleX(0.8890);">1byTDaqS91rBnWJlv$nnxF</span>
<span class="t c" style="left:221.30px;top:662.83px;font-size:14.50px;line-height:14.50px;color:#111;transform:scaleX(0.8950);">M_Single-Flush:0915 x 2134mm:0915 x 2134mm:222117</span>
<span class="t c" style="left:849.00px;top:662.83px;font-size:14.50px;line-height:14.50px;color:#111;transform:scaleX(0.8830);">0915 x 2134mm</span>
<span class="t" style="left:5.20px;top:682.83px;font-size:14.50px;line-height:14.50px;color:#333;transform:scaleX(0.8800);">19</span>
<span class="t c" style="left:27.70px;top:682.83px;font-size:14.50px;line-height:14.50px;color:#111;transform:scaleX(0.8890);">1byTDaqS91rBnWJlv$n$t9</span>
<span class="t c" style="left:221.30px;top:682.83px;font-size:14.50px;line-height:14.50px;color:#111;transform:scaleX(0.8950);">M_Single-Flush:0915 x 2134mm:0915 x 2134mm:229539</span>
<span class="t c" style="left:849.00px;top:682.83px;font-size:14.50px;line-height:14.50px;color:#111;transform:scaleX(0.8830);">0915 x 2134mm</span>
<span class="t" style="left:5.20px;top:702.83px;font-size:14.50px;line-height:14.50px;color:#333;transform:scaleX(0.8800);">20</span>
<span class="t c" style="left:27.70px;top:702.83px;font-size:14.50px;line-height:14.50px;color:#111;transform:scaleX(0.8890);">1byTDaqS91rBnWJlv$nmA0</span>
<span class="t c" style="left:221.30px;top:702.83px;font-size:14.50px;line-height:14.50px;color:#111;transform:scaleX(0.8950);">M_Single-Flush:0915 x 2134mm:0915 x 2134mm:229354</span>
<span class="t c" style="left:849.00px;top:702.83px;font-size:14.50px;line-height:14.50px;color:#111;transform:scaleX(0.8830);">0915 x 2134mm</span>
<span class="t" style="left:5.20px;top:722.83px;font-size:14.50px;line-height:14.50px;color:#333;transform:scaleX(0.8800);">21</span>
<span class="t c" style="left:27.70px;top:722.83px;font-size:14.50px;line-height:14.50px;color:#111;transform:scaleX(0.8890);">35QeWibpT4DfyH3NIf2mJK</span>
<span class="t c" style="left:221.30px;top:722.83px;font-size:14.50px;line-height:14.50px;color:#111;transform:scaleX(0.8950);">M_Single-Flush:0915 x 2134mm:0915 x 2134mm:242319</span>
<span class="t c" style="left:849.00px;top:722.83px;font-size:14.50px;line-height:14.50px;color:#111;transform:scaleX(0.8830);">0915 x 2134mm</span>
<span class="t" style="left:5.20px;top:742.83px;font-size:14.50px;line-height:14.50px;color:#333;transform:scaleX(0.8800);">22</span>
<span class="t c" style="left:27.70px;top:742.83px;font-size:14.50px;line-height:14.50px;color:#111;transform:scaleX(0.8890);">35QeWibpT4DfyH3NIf2nWf</span>
<span class="t c" style="left:221.30px;top:742.83px;font-size:14.50px;line-height:14.50px;color:#111;transform:scaleX(0.8950);">M_Single-Flush:0915 x 2134mm:0915 x 2134mm:241266</span>
<span class="t c" style="left:849.00px;top:742.83px;font-size:14.50px;line-height:14.50px;color:#111;transform:scaleX(0.8830);">0915 x 2134mm</span>
<span class="t" style="left:5.20px;top:762.83px;font-size:14.50px;line-height:14.50px;color:#333;transform:scaleX(0.8800);">23</span>
<span class="t c" style="left:27.70px;top:762.83px;font-size:14.50px;line-height:14.50px;color:#111;transform:scaleX(0.8890);">1byTDaqS91rBnWJlv$n$_5</span>
<span class="t c" style="left:221.30px;top:762.83px;font-size:14.50px;line-height:14.50px;color:#111;transform:scaleX(0.8950);">M_Single-Flush:1000 x 2134mm:1000 x 2134mm:230127</span>
<span class="t c" style="left:849.00px;top:762.83px;font-size:14.50px;line-height:14.50px;color:#111;transform:scaleX(0.8830);">1000 x 2134mm</span>
<span class="t" style="left:5.20px;top:782.83px;font-size:14.50px;line-height:14.50px;color:#333;transform:scaleX(0.8800);">24</span>
<span class="t c" style="left:27.70px;top:782.83px;font-size:14.50px;line-height:14.50px;color:#111;transform:scaleX(0.8890);">35QeWibpT4DfyH3NIf2ojX</span>
<span class="t c" style="left:221.30px;top:782.83px;font-size:14.50px;line-height:14.50px;color:#111;transform:scaleX(0.8950);">M_Single-Flush:0915 x 2134mm:0915 x 2134mm:236858</span>
<span class="t c" style="left:849.00px;top:782.83px;font-size:14.50px;line-height:14.50px;color:#111;transform:scaleX(0.8830);">0915 x 2134mm</span>
<span class="t" style="left:5.20px;top:802.83px;font-size:14.50px;line-height:14.50px;color:#333;transform:scaleX(0.8800);">25</span>
<span class="t c" style="left:27.70px;top:802.83px;font-size:14.50px;line-height:14.50px;color:#111;transform:scaleX(0.8890);">35QeWibpT4DfyH3NIf2nG0</span>
<span class="t c" style="left:221.30px;top:802.83px;font-size:14.50px;line-height:14.50px;color:#111;transform:scaleX(0.8950);">M_Single-Flush:0915 x 2134mm:0915 x 2134mm:238171</span>
<span class="t c" style="left:849.00px;top:802.83px;font-size:14.50px;line-height:14.50px;color:#111;transform:scaleX(0.8830);">0915 x 2134mm</span>
<span class="t" style="left:5.20px;top:822.83px;font-size:14.50px;line-height:14.50px;color:#333;transform:scaleX(0.8800);">26</span>
<span class="t c" style="left:27.70px;top:822.83px;font-size:14.50px;line-height:14.50px;color:#111;transform:scaleX(0.8890);">35QeWibpT4DfyH3NIf2nk$</span>
<span class="t c" style="left:221.30px;top:822.83px;font-size:14.50px;line-height:14.50px;color:#111;transform:scaleX(0.8950);">M_Single-Flush:0915 x 2134mm:0915 x 2134mm:241124</span>
<span class="t c" style="left:849.00px;top:822.83px;font-size:14.50px;line-height:14.50px;color:#111;transform:scaleX(0.8830);">0915 x 2134mm</span>
<span class="t" style="left:5.20px;top:842.83px;font-size:14.50px;line-height:14.50px;color:#333;transform:scaleX(0.8800);">27</span>
<span class="t c" style="left:27.70px;top:842.83px;font-size:14.50px;line-height:14.50px;color:#111;transform:scaleX(0.8890);">1byTDaqS91rBnWJlv$nm9g</span>
<span class="t c" style="left:221.30px;top:842.83px;font-size:14.50px;line-height:14.50px;color:#111;transform:scaleX(0.8950);">M_Single-Flush:0915 x 2134mm:0915 x 2134mm:229120</span>
<span class="t c" style="left:849.00px;top:842.83px;font-size:14.50px;line-height:14.50px;color:#111;transform:scaleX(0.8830);">0915 x 2134mm</span>
<span class="t" style="left:5.20px;top:862.83px;font-size:14.50px;line-height:14.50px;color:#333;transform:scaleX(0.8800);">28</span>
<span class="t c" style="left:27.70px;top:862.83px;font-size:14.50px;line-height:14.50px;color:#111;transform:scaleX(0.8890);">35QeWibpT4DfyH3NIf2nXy</span>
<span class="t c" style="left:221.30px;top:862.83px;font-size:14.50px;line-height:14.50px;color:#111;transform:scaleX(0.8950);">M_Single-Flush:0915 x 2134mm:0915 x 2134mm:241191</span>
<span class="t c" style="left:849.00px;top:862.83px;font-size:14.50px;line-height:14.50px;color:#111;transform:scaleX(0.8830);">0915 x 2134mm</span>
<span class="t" style="left:5.20px;top:882.83px;font-size:14.50px;line-height:14.50px;color:#333;transform:scaleX(0.8800);">29</span>
<span class="t c" style="left:27.70px;top:882.83px;font-size:14.50px;line-height:14.50px;color:#111;transform:scaleX(0.8890);">1byTDaqS91rBnWJlv$n$uh</span>
<span class="t c" style="left:221.30px;top:882.83px;font-size:14.50px;line-height:14.50px;color:#111;transform:scaleX(0.8950);">M_Single-Flush:0915 x 2134mm Rated:0915 x 2134mm Rated:230209</span>
<span class="t c" style="left:849.00px;top:882.83px;font-size:14.50px;line-height:14.50px;color:#111;transform:scaleX(0.8830);">0915 x 2134mm Rated</span>
<span class="t" style="left:5.20px;top:902.83px;font-size:14.50px;line-height:14.50px;color:#333;transform:scaleX(0.8800);">30</span>
<span class="t c" style="left:27.70px;top:902.83px;font-size:14.50px;line-height:14.50px;color:#111;transform:scaleX(0.8890);">1byTDaqS91rBnWJlv$nnv2</span>
<span class="t c" style="left:221.30px;top:902.83px;font-size:14.50px;line-height:14.50px;color:#111;transform:scaleX(0.8950);">M_Single-Flush:0915 x 2134mm:0915 x 2134mm:221992</span>
<span class="t c" style="left:849.00px;top:902.83px;font-size:14.50px;line-height:14.50px;color:#111;transform:scaleX(0.8830);">0915 x 2134mm</span>
<span class="t" style="left:5.20px;top:922.83px;font-size:14.50px;line-height:14.50px;color:#333;transform:scaleX(0.8800);">31</span>
<span class="t c" style="left:27.70px;top:922.83px;font-size:14.50px;line-height:14.50px;color:#111;transform:scaleX(0.8890);">35QeWibpT4DfyH3NIf2sJ8</span>
<span class="t c" style="left:221.30px;top:922.83px;font-size:14.50px;line-height:14.50px;color:#111;transform:scaleX(0.8950);">M_Single-Flush:0915 x 2134mm:0915 x 2134mm:250515</span>
<span class="t c" style="left:849.00px;top:922.83px;font-size:14.50px;line-height:14.50px;color:#111;transform:scaleX(0.8830);">0915 x 2134mm</span>
<span class="t" style="left:5.20px;top:942.83px;font-size:14.50px;line-height:14.50px;color:#333;transform:scaleX(0.8800);">32</span>
<span class="t c" style="left:27.70px;top:942.83px;font-size:14.50px;line-height:14.50px;color:#111;transform:scaleX(0.8890);">1byTDaqS91rBnWJlv$nm6r</span>
<span class="t c" style="left:221.30px;top:942.83px;font-size:14.50px;line-height:14.50px;color:#111;transform:scaleX(0.8950);">M_Single-Flush:0915 x 2134mm:0915 x 2134mm:228575</span>
<span class="t c" style="left:849.00px;top:942.83px;font-size:14.50px;line-height:14.50px;color:#111;transform:scaleX(0.8830);">0915 x 2134mm</span>
<span class="t" style="left:5.20px;top:962.83px;font-size:14.50px;line-height:14.50px;color:#333;transform:scaleX(0.8800);">33</span>
<span class="t c" style="left:27.70px;top:962.83px;font-size:14.50px;line-height:14.50px;color:#111;transform:scaleX(0.8890);">35QeWibpT4DfyH3NIf2ouF</span>
<span class="t c" style="left:221.30px;top:962.83px;font-size:14.50px;line-height:14.50px;color:#111;transform:scaleX(0.8950);">M_Single-Flush:0915 x 2134mm:0915 x 2134mm:235604</span>
<span class="t c" style="left:849.00px;top:962.83px;font-size:14.50px;line-height:14.50px;color:#111;transform:scaleX(0.8830);">0915 x 2134mm</span>
<span class="t" style="left:5.20px;top:982.83px;font-size:14.50px;line-height:14.50px;color:#333;transform:scaleX(0.8800);">34</span>
<span class="t c" style="left:27.70px;top:982.83px;font-size:14.50px;line-height:14.50px;color:#111;transform:scaleX(0.8890);">35QeWibpT4DfyH3NIf2ngM</span>
<span class="t c" style="left:221.30px;top:982.83px;font-size:14.50px;line-height:14.50px;color:#111;transform:scaleX(0.8950);">M_Single-Flush:0915 x 2134mm:0915 x 2134mm:240845</span>
<span class="t c" style="left:849.00px;top:982.83px;font-size:14.50px;line-height:14.50px;color:#111;transform:scaleX(0.8830);">0915 x 2134mm</span>
<span class="t" style="left:5.20px;top:1002.83px;font-size:14.50px;line-height:14.50px;color:#333;transform:scaleX(0.8800);">35</span>
<span class="t c" style="left:27.70px;top:1002.83px;font-size:14.50px;line-height:14.50px;color:#111;transform:scaleX(0.8890);">1eHJakbVPEdf9cGdMXVBAY</span>
<span class="t c" style="left:221.30px;top:1002.83px;font-size:14.50px;line-height:14.50px;color:#111;transform:scaleX(0.8950);">M_Single-Flush:0915 x 2134mm Rated:0915 x 2134mm Rated:471867</span>
<span class="t c" style="left:849.00px;top:1002.83px;font-size:14.50px;line-height:14.50px;color:#111;transform:scaleX(0.8830);">0915 x 2134mm Rated</span>
<span class="t" style="left:5.20px;top:1022.83px;font-size:14.50px;line-height:14.50px;color:#333;transform:scaleX(0.8800);">36</span>
<span class="t c" style="left:27.70px;top:1022.83px;font-size:14.50px;line-height:14.50px;color:#111;transform:scaleX(0.8890);">35QeWibpT4DfyH3NIf2njx</span>
<span class="t c" style="left:221.30px;top:1022.83px;font-size:14.50px;line-height:14.50px;color:#111;transform:scaleX(0.8950);">M_Single-Flush:0915 x 2134mm:0915 x 2134mm:240928</span>
<span class="t c" style="left:849.00px;top:1022.83px;font-size:14.50px;line-height:14.50px;color:#111;transform:scaleX(0.8830);">0915 x 2134mm</span>
<span class="t" style="left:5.20px;top:1042.83px;font-size:14.50px;line-height:14.50px;color:#333;transform:scaleX(0.8800);">37</span>
<span class="t c" style="left:27.70px;top:1042.83px;font-size:14.50px;line-height:14.50px;color:#111;transform:scaleX(0.8890);">35QeWibpT4DfyH3NIf2odN</span>
<span class="t c" style="left:221.30px;top:1042.83px;font-size:14.50px;line-height:14.50px;color:#111;transform:scaleX(0.8950);">M_Single-Flush:0915 x 2134mm:0915 x 2134mm:237452</span>
<span class="t c" style="left:849.00px;top:1042.83px;font-size:14.50px;line-height:14.50px;color:#111;transform:scaleX(0.8830);">0915 x 2134mm</span>
<span class="t" style="left:5.20px;top:1062.83px;font-size:14.50px;line-height:14.50px;color:#333;transform:scaleX(0.8800);">38</span>
<span class="t c" style="left:27.70px;top:1062.83px;font-size:14.50px;line-height:14.50px;color:#111;transform:scaleX(0.8890);">1byTDaqS91rBnWJlv$nmrp</span>
<span class="t c" style="left:221.30px;top:1062.83px;font-size:14.50px;line-height:14.50px;color:#111;transform:scaleX(0.8950);">M_Single-Flush:0915 x 2134mm:0915 x 2134mm:225305</span>
<span class="t c" style="left:849.00px;top:1062.83px;font-size:14.50px;line-height:14.50px;color:#111;transform:scaleX(0.8830);">0915 x 2134mm</span>
<span class="t" style="left:5.20px;top:1082.83px;font-size:14.50px;line-height:14.50px;color:#333;transform:scaleX(0.8800);">39</span>
<span class="t c" style="left:27.70px;top:1082.83px;font-size:14.50px;line-height:14.50px;color:#111;transform:scaleX(0.8890);">1byTDaqS91rBnWJlv$nms7</span>
<span class="t c" style="left:221.30px;top:1082.83px;font-size:14.50px;line-height:14.50px;color:#111;transform:scaleX(0.8950);">M_Single-Flush:0915 x 2134mm:0915 x 2134mm:225517</span>
<span class="t c" style="left:849.00px;top:1082.83px;font-size:14.50px;line-height:14.50px;color:#111;transform:scaleX(0.8830);">0915 x 2134mm</span>
<span class="t" style="left:5.20px;top:1102.83px;font-size:14.50px;line-height:14.50px;color:#333;transform:scaleX(0.8800);">40</span>
<span class="t c" style="left:27.70px;top:1102.83px;font-size:14.50px;line-height:14.50px;color:#111;transform:scaleX(0.8890);">1byTDaqS91rBnWJlv$nmCV</span>
<span class="t c" style="left:221.30px;top:1102.83px;font-size:14.50px;line-height:14.50px;color:#111;transform:scaleX(0.8950);">M_Single-Flush:0915 x 2134mm:0915 x 2134mm:228981</span>
<span class="t c" style="left:849.00px;top:1102.83px;font-size:14.50px;line-height:14.50px;color:#111;transform:scaleX(0.8830);">0915 x 2134mm</span>
<span class="t" style="left:5.20px;top:1122.83px;font-size:14.50px;line-height:14.50px;color:#333;transform:scaleX(0.8800);">41</span>
<span class="t c" style="left:27.70px;top:1122.83px;font-size:14.50px;line-height:14.50px;color:#111;transform:scaleX(0.8890);">35QeWibpT4DfyH3NIf2o5b</span>
<span class="t c" style="left:221.30px;top:1122.83px;font-size:14.50px;line-height:14.50px;color:#111;transform:scaleX(0.8950);">M_Single-Flush:0915 x 2134mm:0915 x 2134mm:235326</span>
<span class="t c" style="left:849.00px;top:1122.83px;font-size:14.50px;line-height:14.50px;color:#111;transform:scaleX(0.8830);">0915 x 2134mm</span>
<span class="t" style="left:5.20px;top:1142.83px;font-size:14.50px;line-height:14.50px;color:#333;transform:scaleX(0.8800);">42</span>
<span class="t c" style="left:27.70px;top:1142.83px;font-size:14.50px;line-height:14.50px;color:#111;transform:scaleX(0.8890);">35QeWibpT4DfyH3NIf2ovI</span>
<span class="t c" style="left:221.30px;top:1142.83px;font-size:14.50px;line-height:14.50px;color:#111;transform:scaleX(0.8950);">M_Single-Flush:0915 x 2134mm:0915 x 2134mm:235529</span>
<span class="t c" style="left:849.00px;top:1142.83px;font-size:14.50px;line-height:14.50px;color:#111;transform:scaleX(0.8830);">0915 x 2134mm</span>
<span class="t" style="left:5.20px;top:1162.83px;font-size:14.50px;line-height:14.50px;color:#333;transform:scaleX(0.8800);">43</span>
<span class="t c" style="left:27.70px;top:1162.83px;font-size:14.50px;line-height:14.50px;color:#111;transform:scaleX(0.8890);">35QeWibpT4DfyH3NIf2o3X</span>
<span class="t c" style="left:221.30px;top:1162.83px;font-size:14.50px;line-height:14.50px;color:#111;transform:scaleX(0.8950);">M_Single-Flush:0915 x 2134mm:0915 x 2134mm:235194</span>
<span class="t c" style="left:849.00px;top:1162.83px;font-size:14.50px;line-height:14.50px;color:#111;transform:scaleX(0.8830);">0915 x 2134mm</span>
<span class="t" style="left:5.20px;top:1182.83px;font-size:14.50px;line-height:14.50px;color:#333;transform:scaleX(0.8800);">44</span>
<span class="t c" style="left:27.70px;top:1182.83px;font-size:14.50px;line-height:14.50px;color:#111;transform:scaleX(0.8890);">35QeWibpT4DfyH3NIf2mOc</span>
<span class="t c" style="left:221.30px;top:1182.83px;font-size:14.50px;line-height:14.50px;color:#111;transform:scaleX(0.8950);">M_Single-Flush:0915 x 2134mm:0915 x 2134mm:241789</span>
<span class="t c" style="left:849.00px;top:1182.83px;font-size:14.50px;line-height:14.50px;color:#111;transform:scaleX(0.8830);">0915 x 2134mm</span>
<span class="t" style="left:5.20px;top:1202.83px;font-size:14.50px;line-height:14.50px;color:#333;transform:scaleX(0.8800);">45</span>
<span class="t c" style="left:27.70px;top:1202.83px;font-size:14.50px;line-height:14.50px;color:#111;transform:scaleX(0.8890);">0mxk1RW8H5mvX1dNnpRqn4</span>
<span class="t c" style="left:221.30px;top:1202.83px;font-size:14.50px;line-height:14.50px;color:#111;transform:scaleX(0.8950);">M_Double-Flush:1830 x 2134mm Exterior:1830 x 2134mm Exterior:252860</span>
<span class="t c" style="left:849.00px;top:1202.83px;font-size:14.50px;line-height:14.50px;color:#111;transform:scaleX(0.8830);">1830 x 2134mm Exterior</span>
<span class="t" style="left:5.20px;top:1222.83px;font-size:14.50px;line-height:14.50px;color:#333;transform:scaleX(0.8800);">46</span>
<span class="t c" style="left:27.70px;top:1222.83px;font-size:14.50px;line-height:14.50px;color:#111;transform:scaleX(0.8890);">1byTDaqS91rBnWJlv$nn6$</span>
<span class="t c" style="left:221.30px;top:1222.83px;font-size:14.50px;line-height:14.50px;color:#111;transform:scaleX(0.8950);">M_Single-Flush:0915 x 2134mm:0915 x 2134mm:224469</span>
<span class="t c" style="left:849.00px;top:1222.83px;font-size:14.50px;line-height:14.50px;color:#111;transform:scaleX(0.8830);">0915 x 2134mm</span>
<span class="t" style="left:5.20px;top:1242.83px;font-size:14.50px;line-height:14.50px;color:#333;transform:scaleX(0.8800);">47</span>
<span class="t c" style="left:27.70px;top:1242.83px;font-size:14.50px;line-height:14.50px;color:#111;transform:scaleX(0.8890);">1byTDaqS91rBnWJlv$nm10</span>
<span class="t c" style="left:221.30px;top:1242.83px;font-size:14.50px;line-height:14.50px;color:#111;transform:scaleX(0.8950);">M_Single-Flush:0915 x 2134mm:0915 x 2134mm:228650</span>
<span class="t c" style="left:849.00px;top:1242.83px;font-size:14.50px;line-height:14.50px;color:#111;transform:scaleX(0.8830);">0915 x 2134mm</span>
<span class="t" style="left:5.20px;top:1262.83px;font-size:14.50px;line-height:14.50px;color:#333;transform:scaleX(0.8800);">48</span>
<span class="t c" style="left:27.70px;top:1262.83px;font-size:14.50px;line-height:14.50px;color:#111;transform:scaleX(0.8890);">1byTDaqS91rBnWJlv$n$rP</span>
<span class="t c" style="left:221.30px;top:1262.83px;font-size:14.50px;line-height:14.50px;color:#111;transform:scaleX(0.8950);">M_Single-Flush:0915 x 2134mm:0915 x 2134mm:229427</span>
<span class="t c" style="left:849.00px;top:1262.83px;font-size:14.50px;line-height:14.50px;color:#111;transform:scaleX(0.8830);">0915 x 2134mm</span>
<span class="t" style="left:5.20px;top:1282.83px;font-size:14.50px;line-height:14.50px;color:#333;transform:scaleX(0.8800);">49</span>
<span class="t c" style="left:27.70px;top:1282.83px;font-size:14.50px;line-height:14.50px;color:#111;transform:scaleX(0.8890);">1byTDaqS91rBnWJlv$n$Zq</span>
<span class="t c" style="left:221.30px;top:1282.83px;font-size:14.50px;line-height:14.50px;color:#111;transform:scaleX(0.8950);">M_Single-Flush:0915 x 2134mm:0915 x 2134mm:230814</span>
<span class="t c" style="left:849.00px;top:1282.83px;font-size:14.50px;line-height:14.50px;color:#111;transform:scaleX(0.8830);">0915 x 2134mm</span>
<span class="t" style="left:5.20px;top:1302.83px;font-size:14.50px;line-height:14.50px;color:#333;transform:scaleX(0.8800);">50</span>
<span class="t c" style="left:27.70px;top:1302.83px;font-size:14.50px;line-height:14.50px;color:#111;transform:scaleX(0.8890);">35QeWibpT4DfyH3NIf2nl2</span>
<span class="t c" style="left:221.30px;top:1302.83px;font-size:14.50px;line-height:14.50px;color:#111;transform:scaleX(0.8950);">M_Single-Flush:0915 x 2134mm:0915 x 2134mm:241049</span>
<span class="t c" style="left:849.00px;top:1302.83px;font-size:14.50px;line-height:14.50px;color:#111;transform:scaleX(0.8830);">0915 x 2134mm</span>
<span class="t" style="left:5.20px;top:1322.83px;font-size:14.50px;line-height:14.50px;color:#333;transform:scaleX(0.8800);">51</span>
<span class="t c" style="left:27.70px;top:1322.83px;font-size:14.50px;line-height:14.50px;color:#111;transform:scaleX(0.8890);">35QeWibpT4DfyH3NIf2nVW</span>
<span class="t c" style="left:221.30px;top:1322.83px;font-size:14.50px;line-height:14.50px;color:#111;transform:scaleX(0.8950);">M_Single-Flush:0915 x 2134mm:0915 x 2134mm:238011</span>
<span class="t c" style="left:849.00px;top:1322.83px;font-size:14.50px;line-height:14.50px;color:#111;transform:scaleX(0.8830);">0915 x 2134mm</span>
<span class="t" style="left:5.20px;top:1342.83px;font-size:14.50px;line-height:14.50px;color:#333;transform:scaleX(0.8800);">52</span>
<span class="t c" style="left:27.70px;top:1342.83px;font-size:14.50px;line-height:14.50px;color:#111;transform:scaleX(0.8890);">35QeWibpT4DfyH3NIf2o3Q</span>
<span class="t c" style="left:221.30px;top:1342.83px;font-size:14.50px;line-height:14.50px;color:#111;transform:scaleX(0.8950);">M_Single-Flush:0915 x 2134mm:0915 x 2134mm:235137</span>
<span class="t c" style="left:849.00px;top:1342.83px;font-size:14.50px;line-height:14.50px;color:#111;transform:scaleX(0.8830);">0915 x 2134mm</span>
<span class="t" style="left:5.20px;top:1362.83px;font-size:14.50px;line-height:14.50px;color:#333;transform:scaleX(0.8800);">53</span>
<span class="t c" style="left:27.70px;top:1362.83px;font-size:14.50px;line-height:14.50px;color:#111;transform:scaleX(0.8890);">35QeWibpT4DfyH3NIf2oil</span>
<span class="t c" style="left:221.30px;top:1362.83px;font-size:14.50px;line-height:14.50px;color:#111;transform:scaleX(0.8950);">M_Single-Flush:0915 x 2134mm:0915 x 2134mm:236916</span>
<span class="t c" style="left:849.00px;top:1362.83px;font-size:14.50px;line-height:14.50px;color:#111;transform:scaleX(0.8830);">0915 x 2134mm</span>
<span class="t" style="left:5.20px;top:1382.83px;font-size:14.50px;line-height:14.50px;color:#333;transform:scaleX(0.8800);">54</span>
<span class="t c" style="left:27.70px;top:1382.83px;font-size:14.50px;line-height:14.50px;color:#111;transform:scaleX(0.8890);">35QeWibpT4DfyH3NIf2nqk</span>
<span class="t c" style="left:221.30px;top:1382.83px;font-size:14.50px;line-height:14.50px;color:#111;transform:scaleX(0.8950);">M_Single-Flush:0915 x 2134mm:0915 x 2134mm:240501</span>
<span class="t c" style="left:849.00px;top:1382.83px;font-size:14.50px;line-height:14.50px;color:#111;transform:scaleX(0.8830);">0915 x 2134mm</span>
<span class="t" style="left:5.20px;top:1402.83px;font-size:14.50px;line-height:14.50px;color:#333;transform:scaleX(0.8800);">55</span>
<span class="t c" style="left:27.70px;top:1402.83px;font-size:14.50px;line-height:14.50px;color:#111;transform:scaleX(0.8890);">35QeWibpT4DfyH3NIf2obk</span>
<span class="t c" style="left:221.30px;top:1402.83px;font-size:14.50px;line-height:14.50px;color:#111;transform:scaleX(0.8950);">M_Single-Flush:0915 x 2134mm:0915 x 2134mm:237365</span>
<span class="t c" style="left:849.00px;top:1402.83px;font-size:14.50px;line-height:14.50px;color:#111;transform:scaleX(0.8830);">0915 x 2134mm</span>
<span class="t" style="left:5.20px;top:1422.83px;font-size:14.50px;line-height:14.50px;color:#333;transform:scaleX(0.8800);">56</span>
<span class="t c" style="left:27.70px;top:1422.83px;font-size:14.50px;line-height:14.50px;color:#111;transform:scaleX(0.8890);">35QeWibpT4DfyH3NIf2nSp</span>
<span class="t c" style="left:221.30px;top:1422.83px;font-size:14.50px;line-height:14.50px;color:#111;transform:scaleX(0.8950);">M_Single-Flush:0915 x 2134mm:0915 x 2134mm:237928</span>
<span class="t c" style="left:849.00px;top:1422.83px;font-size:14.50px;line-height:14.50px;color:#111;transform:scaleX(0.8830);">0915 x 2134mm</span>
<span class="t" style="left:5.20px;top:1442.83px;font-size:14.50px;line-height:14.50px;color:#333;transform:scaleX(0.8800);">57</span>
<span class="t c" style="left:27.70px;top:1442.83px;font-size:14.50px;line-height:14.50px;color:#111;transform:scaleX(0.8890);">35QeWibpT4DfyH3NIf2nYS</span>
<span class="t c" style="left:221.30px;top:1442.83px;font-size:14.50px;line-height:14.50px;color:#111;transform:scaleX(0.8950);">M_Single-Flush:0915 x 2134mm:0915 x 2134mm:241351</span>
<span class="t c" style="left:849.00px;top:1442.83px;font-size:14.50px;line-height:14.50px;color:#111;transform:scaleX(0.8830);">0915 x 2134mm</span>
<span class="t" style="left:5.20px;top:1462.83px;font-size:14.50px;line-height:14.50px;color:#333;transform:scaleX(0.8800);">58</span>
<span class="t c" style="left:27.70px;top:1462.83px;font-size:14.50px;line-height:14.50px;color:#111;transform:scaleX(0.8890);">35QeWibpT4DfyH3NIf2ncB</span>
<span class="t c" style="left:221.30px;top:1462.83px;font-size:14.50px;line-height:14.50px;color:#111;transform:scaleX(0.8950);">M_Single-Flush:0915 x 2134mm:0915 x 2134mm:241616</span>
<span class="t c" style="left:849.00px;top:1462.83px;font-size:14.50px;line-height:14.50px;color:#111;transform:scaleX(0.8830);">0915 x 2134mm</span>
<span class="t" style="left:5.20px;top:1482.83px;font-size:14.50px;line-height:14.50px;color:#333;transform:scaleX(0.8800);">59</span>
<span class="t c" style="left:27.70px;top:1482.83px;font-size:14.50px;line-height:14.50px;color:#111;transform:scaleX(0.8890);">1byTDaqS91rBnWJlv$n$sW</span>
<span class="t c" style="left:221.30px;top:1482.83px;font-size:14.50px;line-height:14.50px;color:#111;transform:scaleX(0.8950);">M_Single-Flush:0915 x 2134mm:0915 x 2134mm:229578</span>
<span class="t c" style="left:849.00px;top:1482.83px;font-size:14.50px;line-height:14.50px;color:#111;transform:scaleX(0.8830);">0915 x 2134mm</span>
<span class="t" style="left:5.20px;top:1502.83px;font-size:14.50px;line-height:14.50px;color:#333;transform:scaleX(0.8800);">60</span>
<span class="t c" style="left:27.70px;top:1502.83px;font-size:14.50px;line-height:14.50px;color:#111;transform:scaleX(0.8890);">1byTDaqS91rBnWJlv$nmQZ</span>
<span class="t c" style="left:221.30px;top:1502.83px;font-size:14.50px;line-height:14.50px;color:#111;transform:scaleX(0.8950);">M_Single-Flush:0915 x 2134mm:0915 x 2134mm:228297</span>
<span class="t c" style="left:849.00px;top:1502.83px;font-size:14.50px;line-height:14.50px;color:#111;transform:scaleX(0.8830);">0915 x 2134mm</span>
<span class="t" style="left:5.20px;top:1522.83px;font-size:14.50px;line-height:14.50px;color:#333;transform:scaleX(0.8800);">61</span>
<span class="t c" style="left:27.70px;top:1522.83px;font-size:14.50px;line-height:14.50px;color:#111;transform:scaleX(0.8890);">1byTDaqS91rBnWJlv$n$Um</span>
<span class="t c" style="left:221.30px;top:1522.83px;font-size:14.50px;line-height:14.50px;color:#111;transform:scaleX(0.8950);">M_Single-Flush:0915 x 2134mm:0915 x 2134mm:232154</span>
<span class="t c" style="left:849.00px;top:1522.83px;font-size:14.50px;line-height:14.50px;color:#111;transform:scaleX(0.8830);">0915 x 2134mm</span>
<span class="t" style="left:5.20px;top:1542.83px;font-size:14.50px;line-height:14.50px;color:#333;transform:scaleX(0.8800);">62</span>
<span class="t c" style="left:27.70px;top:1542.83px;font-size:14.50px;line-height:14.50px;color:#111;transform:scaleX(0.8890);">35QeWibpT4DfyH3NIf2nrl</span>
<span class="t c" style="left:221.30px;top:1542.83px;font-size:14.50px;line-height:14.50px;color:#111;transform:scaleX(0.8950);">M_Single-Flush:0915 x 2134mm:0915 x 2134mm:240436</span>
<span class="t c" style="left:849.00px;top:1542.83px;font-size:14.50px;line-height:14.50px;color:#111;transform:scaleX(0.8830);">0915 x 2134mm</span>
<span class="t" style="left:5.20px;top:1562.83px;font-size:14.50px;line-height:14.50px;color:#333;transform:scaleX(0.8800);">63</span>
<span class="t c" style="left:27.70px;top:1562.83px;font-size:14.50px;line-height:14.50px;color:#111;transform:scaleX(0.8890);">35QeWibpT4DfyH3NIf2nf$</span>
<span class="t c" style="left:221.30px;top:1562.83px;font-size:14.50px;line-height:14.50px;color:#111;transform:scaleX(0.8950);">M_Single-Flush:0915 x 2134mm:0915 x 2134mm:240676</span>
<span class="t c" style="left:849.00px;top:1562.83px;font-size:14.50px;line-height:14.50px;color:#111;transform:scaleX(0.8830);">0915 x 2134mm</span>
<div class="b" style="left:1222.50px;top:300.00px;width:22.00px;height:1278.00px;background:#f0f0f0;"></div>
<div class="b" style="left:1225.00px;top:302.00px;width:18.00px;height:1276.00px;background:#f6f6f6;border-radius:9px;"></div>
<svg class="b" style="left:1229.00px;top:305.00px;" width="9" height="7" viewBox="0 0 9 7"><path d="M4.500 .500l4.300 5.800h-8.600z" fill="#808080"/></svg>
<div class="b" style="left:1228.80px;top:317.40px;width:9.20px;height:303.00px;background:#747474;border-radius:4.600px;"></div>
<svg class="b" style="left:1229.00px;top:1568.00px;" width="9" height="7" viewBox="0 0 9 7"><path d="M4.500 6.500l4.300-5.800h-8.600z" fill="#606060"/></svg>
<div class="b" style="left:0.00px;top:1578.00px;width:1244.50px;height:32.00px;background:#f0f0f0;"></div>
<svg class="b" style="left:27.00px;top:1588.50px;" width="9" height="11" viewBox="0 0 9 11"><path d="M7.500 1l-5 4.300 5 4.300" fill="none" stroke="#a6a6a6" stroke-width="1.300"/></svg>
<svg class="b" style="left:60.00px;top:1588.50px;" width="9" height="11" viewBox="0 0 9 11"><path d="M1.500 1l5 4.300-5 4.300" fill="none" stroke="#a6a6a6" stroke-width="1.300"/></svg>
<span class="t" style="left:122.90px;top:1586.70px;font-size:14.30px;line-height:14.30px;color:#333;transform:scaleX(0.9091);">Sheet1</span>
<div class="b" style="left:177.50px;top:1584.00px;width:1.00px;height:20.00px;background:#d0d0d0;"></div>
<div class="b" style="left:181.80px;top:1577.60px;width:73.50px;height:28.60px;background:#fff;border-radius:0 0 5px 5px;box-shadow:0 1px 2px rgba(0,0,0,.18);"></div>
<span class="t" style="left:190.60px;top:1583.80px;font-size:14.30px;line-height:14.30px;color:#1a1a1a;transform:scaleX(0.9292);-webkit-text-stroke:0.45px #1a1a1a;">Tabelle11</span>
<div class="b" style="left:190.60px;top:1600.50px;width:55.90px;height:2.60px;background:#107C41;border-radius:1.300px;"></div>
<div class="b" style="left:259.20px;top:1584.00px;width:1.00px;height:20.00px;background:#c4c4c4;"></div>
<svg class="b" style="left:301.00px;top:1587.00px;" width="13" height="13" viewBox="0 0 13 13"><path d="M6.500 .500v12M.500 6.500h12" stroke="#333" stroke-width="1.200"/></svg>
<div class="b" style="left:747.20px;top:1589.00px;width:2.00px;height:2.00px;background:#444;border-radius:1px;"></div>
<div class="b" style="left:747.20px;top:1593.50px;width:2.00px;height:2.00px;background:#444;border-radius:1px;"></div>
<div class="b" style="left:747.20px;top:1598.00px;width:2.00px;height:2.00px;background:#444;border-radius:1px;"></div>
<div class="b" style="left:766.00px;top:1585.00px;width:457.00px;height:18.00px;background:#f7f7f7;border-radius:9px;"></div>
<svg class="b" style="left:769.50px;top:1589.00px;" width="7" height="10" viewBox="0 0 7 10"><path d="M.500 5l6-4.500v9z" fill="#666"/></svg>
<div class="b" style="left:782.40px;top:1589.20px;width:335.60px;height:8.60px;background:#717171;border-radius:4.300px;"></div>
<svg class="b" style="left:1212.50px;top:1589.00px;" width="7" height="10" viewBox="0 0 7 10"><path d="M6.500 5l-6-4.500v9z" fill="#444"/></svg>
<div class="b" style="left:0.00px;top:1610.00px;width:2519.00px;height:25.00px;background:#f3f3f3;"></div>
<div class="b" style="left:0.00px;top:1610.00px;width:2519.00px;height:1.00px;background:#cfcfcf;"></div>
<div class="b" style="left:0.00px;top:1633.00px;width:2519.00px;height:1.00px;background:#c6c6c6;"></div>
<div class="b" style="left:0.00px;top:1634.00px;width:2519.00px;height:1.00px;background:#fff;"></div>
<span class="t" style="left:12.40px;top:1615.04px;font-size:12.00px;line-height:12.00px;color:#444;transform:scaleX(0.9188);">Bereit</span>
<svg class="b" style="left:66.00px;top:1616.00px;" width="14" height="13" viewBox="0 0 14 13"><rect x=".600" y=".600" width="12.300" height="10.800" fill="none" stroke="#333" stroke-width="1.100"/><path d="M.600 3.300h12.300M2.500 6h3M2.500 8.500h3" stroke="#333" stroke-width="1"/><circle cx="9.600" cy="8.800" r="3.200" fill="#f3f3f3" stroke="#333" stroke-width="1.100"/><circle cx="9.600" cy="8.800" r="1.400" fill="#333"/></svg>
<svg class="b" style="left:98.00px;top:1615.00px;" width="15" height="15" viewBox="0 0 15 15"><circle cx="6" cy="2" r="1.400" fill="none" stroke="#333" stroke-width="1.100"/><path d="M1 4.500l5 1.500 5-1.500M6 6v4l-3 4.500M6 10l2 2" fill="none" stroke="#333" stroke-width="1.100"/><path d="M9 9.500l5 5M14 9.500l-5 5" stroke="#333" stroke-width="1.200"/></svg>
<span class="t" style="left:116.20px;top:1615.04px;font-size:12.00px;line-height:12.00px;color:#333;transform:scaleX(0.9681);-webkit-text-stroke:0.3px #333;">Barrierefreiheit: Untersuchen</span>
<span class="t" style="left:1991.00px;top:1615.04px;font-size:12.00px;line-height:12.00px;color:#444;transform:scaleX(0.9294);">Anzahl: 765</span>
<svg class="b" style="left:2069.00px;top:1615.50px;" width="15" height="14" viewBox="0 0 15 14"><path d="M8 9.500h-7.400v-9h12.400v5" fill="none" stroke="#333" stroke-width="1.100"/><path d="M4 12h3" stroke="#333" stroke-width="1.100"/><circle cx="10.500" cy="9.800" r="2.600" fill="none" stroke="#333" stroke-width="1.100"/><path d="M10.500 5.800v1.400M10.500 12.400v1.400M6.500 9.800h1.400M13.100 9.800h1.400M7.700 7l1 1M12.300 11.600l1 1M7.700 12.600l1-1M12.300 8l1-1" stroke="#333" stroke-width="1"/></svg>
<span class="t" style="left:2086.00px;top:1616.14px;font-size:12.00px;line-height:12.00px;color:#333;transform:scaleX(0.9800);">Anzeigeeinstellungen</span>
<div class="b" style="left:2217.00px;top:1611.00px;width:39.60px;height:22.00px;background:#dadada;"></div>
<svg class="b" style="left:2229.50px;top:1614.50px;" width="14" height="14" viewBox="0 0 14 14"><rect x=".600" y=".600" width="12.800" height="12.800" fill="none" stroke="#333" stroke-width="1.100"/><path d="M.600 4.800h12.800M.600 9.200h12.800M4.800 .600v12.800M9.200 .600v12.800" stroke="#333" stroke-width="1"/></svg>
<svg class="b" style="left:2270.00px;top:1614.50px;" width="15" height="14" viewBox="0 0 15 14"><rect x=".600" y=".600" width="13.300" height="12.800" rx="1" fill="none" stroke="#333" stroke-width="1.100"/><rect x="3.200" y="3.200" width="8" height="7.600" fill="none" stroke="#333" stroke-width="1"/><path d="M5 5.800h4.500M5 8.200h4.500" stroke="#333" stroke-width=".900"/></svg>
<svg class="b" style="left:2310.00px;top:1614.30px;" width="15" height="14" viewBox="0 0 15 14"><rect x=".600" y=".600" width="13" height="12" fill="none" stroke="#333" stroke-width="1.100"/><path d="M.600 7.600h8.300V.600M4.800 .600v7" fill="none" stroke="#333" stroke-width="1.100"/></svg>
<div class="b" style="left:2342.00px;top:1621.30px;width:9.00px;height:1.20px;background:#444;"></div>
<div class="b" style="left:2355.80px;top:1621.50px;width:100.00px;height:1.00px;background:#8a8a8a;"></div>
<div class="b" style="left:2404.00px;top:1616.50px;width:5.00px;height:11.00px;background:#555;border-radius:1px;"></div>
<svg class="b" style="left:2460.00px;top:1617.00px;" width="10" height="10" viewBox="0 0 10 10"><path d="M5 .500v9M.500 5h9" stroke="#444" stroke-width="1.200"/></svg>
<span class="t" style="left:2482.20px;top:1615.04px;font-size:12.00px;line-height:12.00px;color:#444;transform:scaleX(0.8641);">100 %</span>
<div class="b" style="left:1244.50px;top:300.00px;width:1274.50px;height:1310.00px;background:#f9f9f9;"></div>
<div class="b" style="left:1244.00px;top:301.50px;width:1.00px;height:1308.50px;background:#b8b8b8;"></div>
<span class="t" style="left:1258.00px;top:315.83px;font-size:15.80px;line-height:15.80px;color:#1f1f1f;transform:scaleX(0.9249);-webkit-text-stroke:0.25px #1f1f1f;">IFC Viewer</span>
<svg class="b" style="left:2456.00px;top:318.00px;" width="14" height="9" viewBox="0 0 14 9"><path d="M1 1.500l6 6 6-6" fill="none" stroke="#333" stroke-width="1.200"/></svg>
<svg class="b" style="left:2490.00px;top:318.00px;" width="11" height="11" viewBox="0 0 11 11"><path d="M.500 .500l10 10M10.500 .500l-10 10" stroke="#333" stroke-width="1.200"/></svg>
<div class="b" style="left:1258.00px;top:342.00px;width:1248.00px;height:1254.00px;background:#e6e6e6;border:1px solid #a6a6a6;box-sizing:border-box;"></div>
<svg class="b" style="left:0;top:0" width="2519" height="1635" viewBox="0 0 2519 1635"><defs><clipPath id="vw"><rect x="1623" y="380" width="859" height="1215"/></clipPath></defs><g clip-path="url(#vw)"><rect x="1623" y="379" width="859" height="1216" fill="#e4e4e4"/><polygon points="1623.0,379.0 2482.0,379.0 2482.0,500.0 2413.0,496.4 1623.0,445.8" fill="#e2e2e2" /><polygon points="2307.7,496.4 2412.9,496.4 2364.3,820.0 2348.2,866.5 2336.0,1000.0 2334.6,1000.0 2303.5,1233.0 2256.9,1248.5" fill="#e5e5e5" /><polygon points="2412.9,496.4 2482.0,500.0 2482.0,1030.0 2482.1,1007.8 2334.6,1000.0 2336.0,1000.0 2348.2,866.5 2364.3,820.0" fill="#e4e4e4" /><polygon points="2303.7,860.4 2325.9,869.3 2303.7,1000.0 2280.2,1038.8 2256.9,1038.8" fill="#e6e6e6" /><polygon points="2325.9,869.3 2348.2,866.5 2307.4,1023.3 2297.7,1023.3" fill="#e3e3e3" /><polygon points="2280.2,1038.8 2482.1,1005.8 2482.1,1017.5 2280.2,1048.5" fill="#e7e7e7" /><polygon points="1623.9,1000.0 1670.5,1000.0 1697.7,1132.0 1643.3,1147.6" fill="#e2e2e2" /><polygon points="1670.5,1000.0 1678.3,1000.0 1703.5,1130.1 1697.7,1132.0" fill="#e6e6e6" /><polygon points="1623.9,1147.6 1821.9,1116.5 1837.5,1170.9 1623.9,1215.5" fill="#e6e6e6" /><polygon points="1623.9,1471.8 1864.7,1388.3 1864.7,1408.5 1954.0,1378.6 1988.9,1594.2 1623.9,1594.2" fill="#e2e2e2" /><polygon points="1623.9,1471.8 1864.7,1388.3 1863.9,1400.0 1623.9,1495.1" fill="#e5e5e5" /><polygon points="2338.4,1225.2 2482.1,1388.3 2482.1,1419.4 2365.6,1438.8 2330.7,1264.1" fill="#e0e0e0" /><polygon points="2256.9,1248.5 2482.1,1176.7 2482.1,1194.2 2338.4,1225.2 2256.9,1260.2" fill="#e7e7e7" /><polygon points="2249.1,1295.1 2330.7,1264.1 2365.6,1438.8 2482.1,1419.4 2482.1,1594.2 2326.8,1594.2 2256.9,1493.2 2202.5,1501.0" fill="#e3e3e3" /><polygon points="2198.6,1520.4 2256.9,1493.2 2326.8,1594.2 2241.4,1594.2" fill="#e9e9e9" /><polygon points="2078.3,1574.8 2198.6,1520.4 2241.4,1594.2 2105.4,1594.2" fill="#e6e6e6" /><polygon points="2008.3,1388.3 2132.6,1407.8 2183.1,1501.0 2198.6,1520.4 2078.3,1574.8" fill="#e6e6e6" /><polygon points="1946.2,1388.3 1985.0,1368.9 2008.3,1594.2 1988.9,1594.2" fill="#e1e1e1" /><polygon points="1981.2,1370.9 1998.6,1411.7 2008.3,1594.2 2000.6,1594.2 1983.1,1419.4" fill="#e8e8e8" /><polygon points="1934.6,1236.9 2051.1,1205.8 2053.0,1394.2 2047.2,1396.1 2045.2,1217.5 1942.3,1246.6 1954.0,1384.5 1948.2,1388.3" fill="#dfe1e2" /><polygon points="2132.6,1318.4 2144.3,1314.6 2142.3,1411.7 2130.7,1407.8" fill="#e8e8e8" /><polygon points="2142.3,1411.7 2144.3,1314.6 2202.5,1306.8 2187.0,1501.0" fill="#e2e2e2" /><polygon points="2198.6,1306.8 2220.0,1310.7 2200.6,1499.0 2185.0,1502.9" fill="#e8e8e8" /><polygon points="1745.4,488.8 1731.4,508.6 1844.0,1322.8 1864.4,1408.6 1868.0,1407.0" fill="#A58763" /><polygon points="1743.4,488.8 2347.2,517.2 2250.8,1280.4 1864.4,1408.6" fill="#B38E65" /><polygon points="1771.8,517.2 2330.0,537.2 2241.2,1274.3 2199.1,1225.7 2260.9,544.9 1773.1,529.5" fill="#A3805A" /><polygon points="1781.8,552.3 2233.3,563.1 2182.0,1210.3 1869.9,1298.9" fill="#D2DAE1" /><polygon points="1934.6,1236.9 2051.1,1205.8 2051.1,1247.4 1936.5,1280.4" fill="#ced7de" /><polygon points="2233.3,563.1 2245.7,563.3 2190.3,1218.8 2182.0,1210.3" fill="#A6835A" /><polygon points="2233.3,563.1 2241.1,563.2 2187.5,1216.0 2182.0,1210.3" fill="#937D5E" /><polygon points="1869.9,1298.9 2182.0,1210.3 2186.4,1216.0 1871.2,1307.3" fill="#C4A47A" /><polygon points="1871.2,1307.3 2186.4,1216.0 2190.3,1218.8 1871.8,1312.5" fill="#D4AA7A" /><polygon points="1869.6,1322.8 2199.1,1225.7 2241.2,1274.3 1877.6,1394.0" fill="#D4AA7A" /></g></svg>
<span class="t" style="left:2127.60px;top:355.00px;font-size:13.00px;line-height:13.00px;color:#4a4f57;">mario.beltempo@flinker.app</span>
<div class="b" style="left:2298.00px;top:346.00px;width:72.00px;height:29.00px;background:#fff;border-radius:14.500px;"></div>
<span class="t" style="left:2310.20px;top:355.00px;font-size:13.00px;line-height:13.00px;color:#1f2430;">Sign out</span>
<div class="b" style="left:2489.00px;top:343.00px;width:16.00px;height:1252.00px;background:#f2f2f2;"></div>
<svg class="b" style="left:2493.00px;top:348.00px;" width="10" height="7" viewBox="0 0 10 7"><path d="M5 .500l4.500 6h-9z" fill="#858585" stroke="#858585" stroke-width=".800" stroke-linejoin="round"/></svg>
<div class="b" style="left:2493.50px;top:361.00px;width:8.50px;height:1205.00px;background:#7f7f7f;border-radius:4.250px;"></div>
<svg class="b" style="left:2493.00px;top:1583.00px;" width="10" height="7" viewBox="0 0 10 7"><path d="M5 6.500l4.500-6h-9z" fill="#7a7a7a"/></svg>
<div class="b" style="left:1267.00px;top:380.00px;width:36.00px;height:1215.00px;background:#fff;"></div>
<div class="b" style="left:1303.00px;top:380.00px;width:1.00px;height:1215.00px;background:#e4e4e4;"></div>
<div class="b" style="left:1304.00px;top:380.00px;width:319.00px;height:1215.00px;background:#fff;"></div>
<div class="b" style="left:1304.00px;top:420.00px;width:319.00px;height:1.00px;background:#ececec;"></div>
<div class="b" style="left:1304.00px;top:1528.00px;width:319.00px;height:1.00px;background:#efefef;"></div>
<svg class="b" style="left:1277.95px;top:389.25px;" width="13.5" height="13.5" viewBox="0 0 24 24"><g stroke="#111" stroke-width="2.700" fill="none" stroke-linecap="round" stroke-linejoin="round"><path d="M21 8a2 2 0 0 0-1-1.730l-7-4a2 2 0 0 0-2 0l-7 4A2 2 0 0 0 3 8v8a2 2 0 0 0 1 1.730l7 4a2 2 0 0 0 2 0l7-4A2 2 0 0 0 21 16Z"/><path d="m3.300 7 8.700 5 8.700-5"/><path d="M12 22V12"/></g></svg>
<div class="b" style="left:1286.80px;top:399.40px;width:13.00px;height:13.00px;background:#f1f1f1;border-radius:6.500px;"></div>
<span class="t" style="left:1291.20px;top:401.68px;font-size:9.00px;line-height:9.00px;color:#222;">1</span>
<svg class="b" style="left:1277.95px;top:421.75px;" width="13.5" height="13.5" viewBox="0 0 24 24"><g stroke="#111" stroke-width="2.700" fill="none" stroke-linecap="round" stroke-linejoin="round"><polygon points="22 3 2 3 10 12.460 10 19 14 21 14 12.460 22 3"/></g></svg>
<svg class="b" style="left:1277.95px;top:454.25px;" width="13.5" height="13.5" viewBox="0 0 24 24"><g stroke="#111" stroke-width="2.700" fill="none" stroke-linecap="round" stroke-linejoin="round"><path d="M7.900 20A9 9 0 1 0 4 16.100L2 22Z"/><path d="M8 12h.010"/><path d="M12 12h.010"/><path d="M16 12h.010"/></g></svg>
<svg class="b" style="left:1277.95px;top:486.25px;" width="13.5" height="13.5" viewBox="0 0 24 24"><g stroke="#111" stroke-width="2.700" fill="none" stroke-linecap="round" stroke-linejoin="round"><circle cx="12" cy="12" r="10"/><path d="m9 12 2 2 4-4"/></g></svg>
<svg class="b" style="left:1277.95px;top:518.25px;" width="13.5" height="13.5" viewBox="0 0 24 24"><g stroke="#111" stroke-width="2.700" fill="none" stroke-linecap="round" stroke-linejoin="round"><circle cx="6" cy="6" r="3"/><path d="M8.120 8.120 12 12"/><path d="M20 4 8.120 15.880"/><circle cx="6" cy="18" r="3"/><path d="M14.800 14.800 20 20"/></g></svg>
<svg class="b" style="left:1277.95px;top:549.75px;" width="13.5" height="13.5" viewBox="0 0 24 24"><g stroke="#111" stroke-width="2.700" fill="none" stroke-linecap="round" stroke-linejoin="round"><path d="M2 3h20M2 3v0M2 1.500v3M22 1.500v3"/><rect x="2" y="10" width="20" height="10" rx="2"/><path d="M7 15v-2M12 15v-2M17 15v-2"/></g></svg>
<div class="b" style="left:1271.00px;top:575.00px;width:27.70px;height:27.60px;background:#e5e5e7;border-radius:6px;"></div>
<svg class="b" style="left:1276.00px;top:580.00px;" width="17.8" height="17.8" viewBox="0 0 20 20"><defs><linearGradient id="rg1" x1=".800" y1="0" x2=".200" y2="1"><stop offset="0" stop-color="#2fa4ea"/><stop offset=".500" stop-color="#1a7fd3"/><stop offset="1" stop-color="#0b4a9c"/></linearGradient></defs><circle cx="10" cy="10" r="6.600" fill="none" stroke="url(#rg1)" stroke-width="4.600"/></svg>
<svg class="b" style="left:1277.95px;top:614.55px;" width="13.5" height="13.5" viewBox="0 0 24 24"><g stroke="#b0b0ba" stroke-width="2.700" fill="none" stroke-linecap="round" stroke-linejoin="round"><circle cx="12" cy="12" r="10"/><path d="M9.090 9a3 3 0 0 1 5.830 1c0 2-3 3-3 3"/><path d="M12 17h.010"/></g></svg>
<svg class="b" style="left:1277.95px;top:642.25px;" width="13.5" height="13.5" viewBox="0 0 24 24"><g stroke="#b0b0ba" stroke-width="2.700" fill="none" stroke-linecap="round" stroke-linejoin="round"><path d="M9.500 17.500c0-2-3-3.500-3-7a5.500 5.500 0 0 1 11 0c0 3.500-3 5-3 7z"/><path d="M10 21h4"/><path d="M12 1v1M3.500 4.500l1 1M20.500 4.500l-1 1M1 11.500h1M22 11.500h1"/></g></svg>
<svg class="b" style="left:1316.50px;top:390.70px;" width="19" height="19" viewBox="0 0 20 20"><defs><linearGradient id="rg2" x1=".800" y1="0" x2=".200" y2="1"><stop offset="0" stop-color="#2fa4ea"/><stop offset=".500" stop-color="#1a7fd3"/><stop offset="1" stop-color="#0b4a9c"/></linearGradient></defs><circle cx="10" cy="10" r="6.600" fill="none" stroke="url(#rg2)" stroke-width="4.600"/></svg>
<span class="t" style="left:1344.30px;top:393.70px;font-size:14.30px;line-height:14.30px;color:#2a2f3a;-webkit-text-stroke:0.22px #2a2f3a;">Copilot for IFC</span>
<svg class="b" style="left:1591.00px;top:393.00px;" width="15" height="14" viewBox="0 0 24 24"><g stroke="#b3b3b3" stroke-width="1.800" fill="none" stroke-linecap="round" stroke-linejoin="round"><path d="M3 12a9 9 0 0 1 9-9 9.750 9.750 0 0 1 6.740 2.740L21 8"/><path d="M21 3v5h-5"/><path d="M21 12a9 9 0 0 1-9 9 9.750 9.750 0 0 1-6.740-2.740L3 16"/><path d="M8 16H3v5"/></g></svg>
<span class="t" style="left:1316.20px;top:436.38px;font-size:11.60px;line-height:11.60px;color:#6b6b6b;transform:scaleX(1.0246);">Open an IFC file to get started.</span>
<svg class="b" style="left:1317.00px;top:462.50px;" width="12" height="14" viewBox="2 1 20 22"><g stroke="#8a8a8a" stroke-width="1.700" fill="none" stroke-linecap="round" stroke-linejoin="round"><path d="M15 2H6a2 2 0 0 0-2 2v16a2 2 0 0 0 2 2h12a2 2 0 0 0 2-2V7Z"/><path d="M14 2v4a2 2 0 0 0 2 2h4"/><path d="M10 13h4M10 17h4"/></g></svg>
<span class="t" style="left:1336.20px;top:463.93px;font-size:11.30px;line-height:11.30px;color:#6b6b6b;transform:scaleX(1.0306);">File: NBU_MedicalClinic_Arch-Optimized.ifc</span>
<span class="t" style="left:1316.00px;top:1548.39px;font-size:12.30px;line-height:12.30px;color:#7a7a7a;transform:scaleX(1.0508);">Ask about the IFC model...</span>
<div class="b" style="left:1583.00px;top:1555.00px;width:28.00px;height:28.00px;background:#a9a9a9;border-radius:14px;"></div>
<svg class="b" style="left:1590.00px;top:1562.00px;" width="14" height="14" viewBox="0 0 14 14"><path d="M7 12.500v-11M2.500 6l4.500-4.500 4.500 4.500" fill="none" stroke="#fff" stroke-width="1.300"/></svg>
<div class="b" style="left:2442.00px;top:383.00px;width:36.00px;height:160.00px;background:#fff;border-radius:6px;"></div>
<svg class="b" style="left:2452.10px;top:393.50px;" width="15" height="15" viewBox="0 0 24 24"><g stroke="#111" stroke-width="2.600" fill="none" stroke-linecap="round" stroke-linejoin="round"><path d="M3 9V3h6M3 3l5.500 5.500M15 3h6v6M21 3l-5.500 5.500M9 21H3v-6M3 21l5.500-5.500M21 15v6h-6M21 21l-5.500-5.500"/></g></svg>
<svg class="b" style="left:2452.10px;top:425.50px;" width="15" height="15" viewBox="0 0 24 24"><g stroke="#111" stroke-width="2.600" fill="none" stroke-linecap="round" stroke-linejoin="round"><path d="M3 7V5a2 2 0 0 1 2-2h2"/><path d="M17 3h2a2 2 0 0 1 2 2v2"/><path d="M21 17v2a2 2 0 0 1-2 2h-2"/><path d="M7 21H5a2 2 0 0 1-2-2v-2"/><path d="M12 6.500l5 2.800v5.400l-5 2.800-5-2.800V9.300Z"/><path d="M7 9.300l5 2.700 5-2.700M12 12v5.500"/></g></svg>
<svg class="b" style="left:2452.10px;top:457.50px;" width="15" height="15" viewBox="0 0 24 24"><g stroke="#111" stroke-width="2.600" fill="none" stroke-linecap="round" stroke-linejoin="round"><rect x="4" y="11" width="16" height="10" rx="2"/><path d="M8 11V7a4 4 0 0 1 7.500-2"/><path d="M12 15.500v1"/></g></svg>
<svg class="b" style="left:2452.10px;top:489.50px;" width="15" height="15" viewBox="0 0 24 24"><g stroke="#111" stroke-width="2.600" fill="none" stroke-linecap="round" stroke-linejoin="round"><circle cx="12" cy="12" r="8.800" stroke-dasharray="5.200 4" stroke-dashoffset="2.600"/><path d="M12 12.500v3M12 12.500l-2.600-2M12 12.500l2.600-2" stroke-width="2"/></g></svg>
<svg class="b" style="left:2452.10px;top:521.50px;" width="15" height="15" viewBox="0 0 24 24"><g stroke="#111" stroke-width="2.600" fill="none" stroke-linecap="round" stroke-linejoin="round"><path d="M20 10c0 5-5.500 10.200-7.400 11.800a1 1 0 0 1-1.200 0C9.500 20.200 4 15 4 10a8 8 0 0 1 16 0"/><circle cx="12" cy="10" r="3"/></g></svg>
<div class="b" style="left:2443.50px;top:1561.00px;width:34.00px;height:31.00px;background:#e9e9e9;border:1px solid #f4f4f4;border-radius:50%;box-sizing:border-box;"></div>
<svg class="b" style="left:2452.00px;top:1568.00px;" width="17" height="17" viewBox="0 0 17 17"><circle cx="8.500" cy="6" r="4.800" fill="#7db3f5"/><path d="M8.500 3.300l.8 1.700 1.800.2-1.300 1.200.3 1.800-1.600-.9-1.600.9.300-1.800-1.300-1.200 1.800-.2z" fill="#1a3fae"/><path d="M5.500 9.500l-3.500 5.500 2.800-.5 1 2.500 2.200-5zM11.500 9.500l3.500 5.500-2.800-.5-1 2.500-2.200-5z" fill="#2456d6"/></svg>
<div class="b" style="left:672.00px;top:733.00px;width:214.00px;height:138.00px;background:#fff;border:1px solid #8f8f8f;border-radius:9px;box-sizing:border-box;box-shadow:0 10px 32px rgba(0,0,0,.30),0 2px 8px rgba(0,0,0,.14);"></div>
<span class="t" style="left:682.20px;top:742.67px;font-size:12.20px;line-height:12.20px;color:#b9b9b9;transform:scaleX(0.9528);">Tabelle erstellen</span>
<span class="t" style="left:813.50px;top:742.50px;font-size:13.00px;line-height:13.00px;color:#a9a9a9;">?</span>
<svg class="b" style="left:856.50px;top:743.00px;" width="11" height="11" viewBox="0 0 11 11"><path d="M.500 .500l10 10M10.500 .500l-10 10" stroke="#9a9a9a" stroke-width="1.100"/></svg>
<span class="t" style="left:679.30px;top:774.27px;font-size:12.20px;line-height:12.20px;color:#1a1a1a;transform:scaleX(0.9565);">Wo sind die Daten für die Tabelle?</span>
<div class="b" style="left:679.30px;top:786.60px;width:10.50px;height:1.00px;background:#1a1a1a;"></div>
<div class="b" style="left:679.00px;top:790.00px;width:200.00px;height:23.50px;background:#fff;border:1px solid #8a8a8a;border-radius:3.500px;box-sizing:border-box;"></div>
<div class="b" style="left:858.50px;top:791.00px;width:19.50px;height:21.50px;background:#fdfdfd;border-left:1px solid #d8d8d8;border-radius:0 3px 3px 0;box-sizing:border-box;"></div>
<span class="t" style="left:683.50px;top:795.63px;font-size:11.30px;line-height:11.30px;color:#2a2a3a;transform:scaleX(0.9333);">$A$1:$C$255</span>
<svg class="b" style="left:863.50px;top:795.50px;" width="10" height="12" viewBox="0 0 10 12"><path d="M5 9.500v-7.500M1.300 5l3.700-3.700 3.700 3.700" fill="none" stroke="#111" stroke-width="2"/><path d="M1 11h8" stroke="#111" stroke-width="1.500"/></svg>
<div class="b" style="left:679.00px;top:818.00px;width:13.00px;height:13.00px;background:#fff;border:1px solid #7a7a7a;border-radius:2.500px;box-sizing:border-box;"></div>
<span class="t" style="left:697.40px;top:819.67px;font-size:12.20px;line-height:12.20px;color:#1a1a1a;transform:scaleX(0.9656);">Tabelle hat Überschriften</span>
<div class="b" style="left:821.50px;top:832.00px;width:6.20px;height:1.00px;background:#1a1a1a;"></div>
<div class="b" style="left:718.00px;top:839.00px;width:76.00px;height:24.00px;background:#fff;border:1px solid #8a8a8a;border-radius:3.500px;box-sizing:border-box;"></div>
<span class="t" style="left:748.15px;top:845.97px;font-size:12.20px;line-height:12.20px;color:#1a1a1a;transform:scaleX(0.8907);">OK</span>
<div class="b" style="left:803.00px;top:839.00px;width:76.00px;height:24.00px;background:#fff;border:1px solid #8a8a8a;border-radius:3.500px;box-sizing:border-box;"></div>
<span class="t" style="left:812.25px;top:845.97px;font-size:12.20px;line-height:12.20px;color:#1a1a1a;transform:scaleX(0.9745);">Abbrechen</span>
</body></html>
